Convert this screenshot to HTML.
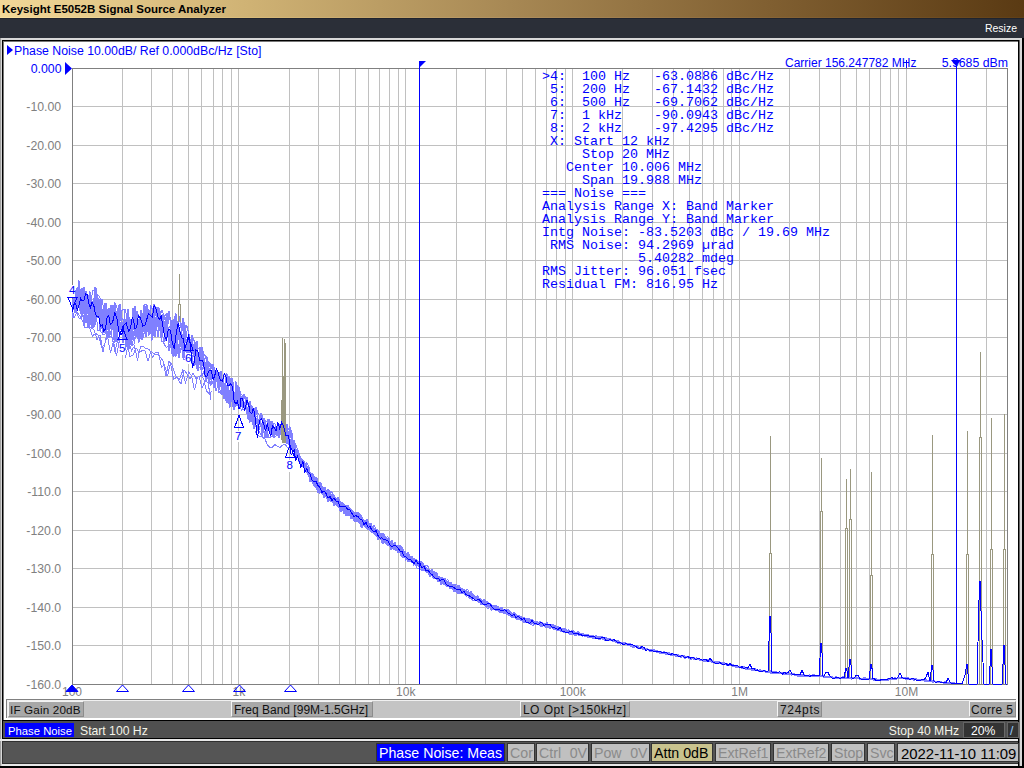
<!DOCTYPE html><html><head><meta charset="utf-8"><style>
html,body{margin:0;padding:0;width:1024px;height:768px;overflow:hidden;background:#000;position:relative}
.t{position:absolute;white-space:pre}
.r{position:absolute}
</style></head><body><div class="r" style="left:0px;top:0px;width:1024px;height:768px;background:#c8c8c8;"></div>
<div class="r" style="left:0px;top:0px;width:1024px;height:18px;background:linear-gradient(to right,#f2d898 0%,#cfb274 24.4%,#a78854 49.8%,#805f31 75.2%,#5a3a13 100%);"></div>
<div class="r" style="left:0px;top:17px;width:1024px;height:1px;background:linear-gradient(to right,#f8e0a0 0%,#d8bb7a 24.4%,#b09060 49.8%,#886537 75.2%,#603f16 100%);"></div>
<div class="t" style="left:2px;top:4.45px;font-size:11.5px;line-height:11.5px;color:#000;font-weight:bold;font-family:'Liberation Sans', sans-serif;">Keysight E5052B Signal Source Analyzer</div>
<div class="r" style="left:0px;top:18px;width:1024px;height:20px;background:#2b2f38;"></div>
<div class="r" style="left:0px;top:18px;width:1024px;height:1px;background:#20242e;"></div>
<div class="t" style="right:7px;top:23.28px;font-size:10.5px;line-height:10.5px;color:#fff;font-weight:normal;font-family:'Liberation Sans', sans-serif;">Resize</div>
<div class="r" style="left:0px;top:38px;width:1024px;height:730px;background:#000;"></div>
<div class="r" style="left:0px;top:38px;width:1022px;height:728px;background:#d8d8d8;"></div>
<div class="r" style="left:0px;top:38px;width:1px;height:730px;background:#a0a0a0;"></div>
<div class="r" style="left:2px;top:40px;width:1017px;height:681px;background:#000;"></div>
<div class="r" style="left:3px;top:41px;width:1015px;height:679px;background:#777;"></div>
<div class="r" style="left:4px;top:42px;width:1014px;height:678px;background:#fff;"></div>
<div class="r" style="left:1019px;top:40px;width:1px;height:726px;background:#666;"></div>
<div class="r" style="left:1018px;top:40px;width:1px;height:726px;background:#000;"></div>
<svg width="1024" height="768" style="position:absolute;left:0;top:0"><rect x="122" y="68" width="1" height="616" fill="#c0c0c0"/><rect x="151" y="68" width="1" height="616" fill="#c0c0c0"/><rect x="172" y="68" width="1" height="616" fill="#c0c0c0"/><rect x="188" y="68" width="1" height="616" fill="#c0c0c0"/><rect x="201" y="68" width="1" height="616" fill="#c0c0c0"/><rect x="213" y="68" width="1" height="616" fill="#c0c0c0"/><rect x="222" y="68" width="1" height="616" fill="#c0c0c0"/><rect x="231" y="68" width="1" height="616" fill="#c0c0c0"/><rect x="238" y="68" width="1" height="616" fill="#c0c0c0"/><rect x="289" y="68" width="1" height="616" fill="#c0c0c0"/><rect x="318" y="68" width="1" height="616" fill="#c0c0c0"/><rect x="339" y="68" width="1" height="616" fill="#c0c0c0"/><rect x="355" y="68" width="1" height="616" fill="#c0c0c0"/><rect x="368" y="68" width="1" height="616" fill="#c0c0c0"/><rect x="379" y="68" width="1" height="616" fill="#c0c0c0"/><rect x="389" y="68" width="1" height="616" fill="#c0c0c0"/><rect x="398" y="68" width="1" height="616" fill="#c0c0c0"/><rect x="405" y="68" width="1" height="616" fill="#c0c0c0"/><rect x="456" y="68" width="1" height="616" fill="#c0c0c0"/><rect x="485" y="68" width="1" height="616" fill="#c0c0c0"/><rect x="506" y="68" width="1" height="616" fill="#c0c0c0"/><rect x="522" y="68" width="1" height="616" fill="#c0c0c0"/><rect x="535" y="68" width="1" height="616" fill="#c0c0c0"/><rect x="546" y="68" width="1" height="616" fill="#c0c0c0"/><rect x="556" y="68" width="1" height="616" fill="#c0c0c0"/><rect x="565" y="68" width="1" height="616" fill="#c0c0c0"/><rect x="572" y="68" width="1" height="616" fill="#c0c0c0"/><rect x="622" y="68" width="1" height="616" fill="#c0c0c0"/><rect x="652" y="68" width="1" height="616" fill="#c0c0c0"/><rect x="673" y="68" width="1" height="616" fill="#c0c0c0"/><rect x="689" y="68" width="1" height="616" fill="#c0c0c0"/><rect x="702" y="68" width="1" height="616" fill="#c0c0c0"/><rect x="713" y="68" width="1" height="616" fill="#c0c0c0"/><rect x="723" y="68" width="1" height="616" fill="#c0c0c0"/><rect x="731" y="68" width="1" height="616" fill="#c0c0c0"/><rect x="739" y="68" width="1" height="616" fill="#c0c0c0"/><rect x="789" y="68" width="1" height="616" fill="#c0c0c0"/><rect x="819" y="68" width="1" height="616" fill="#c0c0c0"/><rect x="840" y="68" width="1" height="616" fill="#c0c0c0"/><rect x="856" y="68" width="1" height="616" fill="#c0c0c0"/><rect x="869" y="68" width="1" height="616" fill="#c0c0c0"/><rect x="880" y="68" width="1" height="616" fill="#c0c0c0"/><rect x="890" y="68" width="1" height="616" fill="#c0c0c0"/><rect x="898" y="68" width="1" height="616" fill="#c0c0c0"/><rect x="906" y="68" width="1" height="616" fill="#c0c0c0"/><rect x="956" y="68" width="1" height="616" fill="#c0c0c0"/><rect x="986" y="68" width="1" height="616" fill="#c0c0c0"/><rect x="72" y="106" width="935" height="1" fill="#c0c0c0"/><rect x="72" y="145" width="935" height="1" fill="#c0c0c0"/><rect x="72" y="183" width="935" height="1" fill="#c0c0c0"/><rect x="72" y="222" width="935" height="1" fill="#c0c0c0"/><rect x="72" y="260" width="935" height="1" fill="#c0c0c0"/><rect x="72" y="299" width="935" height="1" fill="#c0c0c0"/><rect x="72" y="337" width="935" height="1" fill="#c0c0c0"/><rect x="72" y="376" width="935" height="1" fill="#c0c0c0"/><rect x="72" y="414" width="935" height="1" fill="#c0c0c0"/><rect x="72" y="453" width="935" height="1" fill="#c0c0c0"/><rect x="72" y="491" width="935" height="1" fill="#c0c0c0"/><rect x="72" y="530" width="935" height="1" fill="#c0c0c0"/><rect x="72" y="568" width="935" height="1" fill="#c0c0c0"/><rect x="72" y="607" width="935" height="1" fill="#c0c0c0"/><rect x="72" y="645" width="935" height="1" fill="#c0c0c0"/><rect x="72" y="68" width="936" height="1" fill="#808080"/><rect x="72" y="684" width="936" height="1" fill="#808080"/><rect x="72" y="68" width="1" height="617" fill="#808080"/><rect x="1007" y="68" width="1" height="617" fill="#808080"/><polygon points="72.0,299.1 74.0,299.1 76.0,297.7 78.0,296.3 80.0,297.8 82.0,299.0 84.0,302.6 86.0,305.6 88.0,303.0 90.0,303.0 92.0,304.8 94.0,304.7 96.0,304.5 98.0,304.6 100.0,309.2 102.0,313.5 104.0,313.7 106.0,315.6 108.0,313.9 110.0,315.4 112.0,315.2 114.0,318.3 116.0,317.6 118.0,320.9 120.0,321.8 122.0,322.3 124.0,319.8 126.0,323.3 128.0,323.9 130.0,323.6 132.0,320.5 134.0,321.4 136.0,320.2 138.0,320.1 140.0,322.6 142.0,319.2 144.0,319.9 146.0,320.7 148.0,317.9 150.0,318.1 152.0,317.9 154.0,317.4 156.0,316.4 158.0,319.4 160.0,322.3 162.0,319.5 164.0,324.6 166.0,325.1 168.0,325.5 170.0,331.3 172.0,331.3 174.0,329.2 176.0,331.3 178.0,331.6 180.0,330.0 182.0,333.8 184.0,335.3 186.0,339.3 188.0,343.6 190.0,343.6 192.0,347.2 194.0,348.4 196.0,351.6 198.0,352.1 200.0,355.5 202.0,359.3 204.0,364.2 206.0,367.6 208.0,366.7 210.0,370.4 212.0,374.0 214.0,371.5 216.0,375.2 218.0,377.2 220.0,380.7 222.0,381.8 224.0,382.2 226.0,384.2 228.0,386.5 230.0,391.3 232.0,389.5 234.0,390.9 236.0,393.5 238.0,394.8 240.0,396.7 242.0,397.4 244.0,401.1 246.0,402.9 248.0,408.2 250.0,410.3 252.0,412.2 254.0,416.1 256.0,417.0 258.0,421.0 260.0,421.3 262.0,423.6 264.0,422.1 266.0,425.7 268.0,423.5 270.0,423.8 272.0,427.3 274.0,427.2 276.0,428.9 278.0,431.5 280.0,426.2 282.0,426.6 284.0,428.8 286.0,431.1 288.0,432.0 290.0,433.9 292.0,440.2 294.0,444.9 296.0,447.5 298.0,453.9 300.0,459.1 302.0,459.9 304.0,464.3 306.0,465.0 306.0,466.1 304.0,468.8 302.0,463.7 300.0,461.3 298.0,455.1 296.0,452.0 294.0,445.9 292.0,441.3 290.0,437.3 288.0,435.0 286.0,435.3 284.0,432.8 282.0,432.5 280.0,428.7 278.0,430.1 276.0,431.7 274.0,429.6 272.0,430.0 270.0,430.8 268.0,429.9 266.0,429.8 264.0,429.1 262.0,424.2 260.0,423.6 258.0,425.6 256.0,422.6 254.0,418.6 252.0,418.1 250.0,411.1 248.0,408.7 246.0,409.4 244.0,407.7 242.0,404.7 240.0,402.6 238.0,401.7 236.0,397.0 234.0,399.9 232.0,396.0 230.0,397.2 228.0,394.6 226.0,392.1 224.0,389.4 222.0,386.0 220.0,385.3 218.0,383.8 216.0,378.8 214.0,378.6 212.0,378.5 210.0,377.4 208.0,375.8 206.0,371.6 204.0,368.7 202.0,365.4 200.0,363.8 198.0,359.6 196.0,357.2 194.0,355.5 192.0,353.8 190.0,350.4 188.0,350.4 186.0,343.8 184.0,341.7 182.0,341.4 180.0,339.0 178.0,340.6 176.0,339.0 174.0,339.9 172.0,339.1 170.0,337.9 168.0,331.9 166.0,331.5 164.0,330.1 162.0,326.2 160.0,328.4 158.0,326.3 156.0,323.7 154.0,323.8 152.0,327.8 150.0,324.5 148.0,324.2 146.0,326.4 144.0,326.8 142.0,327.9 140.0,327.6 138.0,328.4 136.0,328.2 134.0,329.9 132.0,332.2 130.0,331.4 128.0,334.4 126.0,331.1 124.0,331.7 122.0,330.2 120.0,330.1 118.0,328.1 116.0,329.4 114.0,325.2 112.0,325.4 110.0,324.3 108.0,323.8 106.0,325.3 104.0,324.3 102.0,317.6 100.0,317.6 98.0,316.0 96.0,312.1 94.0,314.1 92.0,310.0 90.0,313.5 88.0,308.6 86.0,311.9 84.0,308.6 82.0,305.7 80.0,306.8 78.0,305.2 76.0,306.2 74.0,306.3 72.0,307.4" fill="#8080ff" shape-rendering="crispEdges"/><polyline points="72.0,317.9 74.0,297.8 76.0,292.2 78.0,300.0 80.0,309.6 82.0,288.0 84.0,301.7 86.0,293.0 88.0,314.4 90.0,322.0 92.0,302.9 94.0,302.8 96.0,310.7 98.0,297.6 100.0,302.9 102.0,309.8 104.0,317.6 106.0,305.1 108.0,329.5 110.0,323.9 112.0,314.0 114.0,305.4 116.0,334.7 118.0,308.9 120.0,309.7 122.0,310.4 124.0,308.9 126.0,346.9 128.0,318.3 130.0,319.4 132.0,340.3 134.0,330.8 136.0,313.4 138.0,322.6 140.0,339.3 142.0,319.5 144.0,331.7 146.0,307.8 148.0,331.2 150.0,332.5 152.0,334.0 154.0,327.7 156.0,317.1 158.0,308.0 160.0,323.8 162.0,333.7 164.0,315.7 166.0,319.6 168.0,332.0 170.0,343.4 172.0,352.7 174.0,318.7 176.0,321.4 178.0,349.4 180.0,342.0 182.0,347.0 184.0,359.5 186.0,358.5 188.0,357.1 190.0,357.2 192.0,346.6 194.0,357.0 196.0,344.3 198.0,365.7 200.0,368.2 202.0,369.9 204.0,364.1 206.0,365.2 208.0,369.2 210.0,362.5 212.0,384.1 214.0,378.0 216.0,375.5 218.0,381.1 220.0,387.1 222.0,380.2 224.0,395.5 226.0,401.0 228.0,386.4 230.0,379.9 232.0,402.1 234.0,410.3 236.0,385.3 238.0,403.5 240.0,407.4 242.0,410.4 244.0,395.8 246.0,397.8 248.0,418.3 250.0,403.1 252.0,406.9 254.0,419.6 256.0,418.7 258.0,428.1 260.0,416.3 262.0,434.9 264.0,419.7 266.0,433.6 268.0,418.8 270.0,428.3 272.0,420.9 274.0,427.1 276.0,427.2 278.0,433.7 280.0,428.5 282.0,420.1 284.0,441.9 286.0,441.1 288.0,443.3 290.0,431.0 292.0,439.0 294.0,441.4 296.0,445.4 298.0,450.0 300.0,459.9 302.0,458.9 304.0,461.7 306.0,470.8" fill="none" stroke="#8080ff" stroke-width="1" shape-rendering="crispEdges"/><polyline points="73.0,301.8 75.0,289.9 77.0,309.1 79.0,291.4 81.0,304.8 83.0,296.7 85.0,308.0 87.0,312.8 89.0,309.4 91.0,303.7 93.0,321.3 95.0,325.8 97.0,293.9 99.0,296.1 101.0,299.5 103.0,334.7 105.0,334.6 107.0,310.4 109.0,338.0 111.0,310.2 113.0,322.5 115.0,322.9 117.0,341.8 119.0,305.3 121.0,318.2 123.0,332.1 125.0,308.6 127.0,316.7 129.0,326.4 131.0,342.9 133.0,336.8 135.0,338.4 137.0,335.3 139.0,332.8 141.0,337.7 143.0,330.8 145.0,332.3 147.0,315.3 149.0,309.6 151.0,331.6 153.0,308.5 155.0,337.0 157.0,325.5 159.0,317.4 161.0,338.2 163.0,314.0 165.0,328.3 167.0,313.2 169.0,351.3 171.0,337.0 173.0,348.8 175.0,326.1 177.0,349.4 179.0,344.8 181.0,342.8 183.0,357.5 185.0,337.9 187.0,340.3 189.0,353.1 191.0,360.2 193.0,345.8 195.0,359.0 197.0,346.3 199.0,360.1 201.0,370.0 203.0,350.6 205.0,374.4 207.0,356.4 209.0,384.5 211.0,374.0 213.0,373.9 215.0,383.3 217.0,379.7 219.0,386.6 221.0,371.2 223.0,386.4 225.0,388.5 227.0,402.9 229.0,375.7 231.0,391.3 233.0,398.3 235.0,396.6 237.0,384.6 239.0,401.0 241.0,393.9 243.0,395.9 245.0,410.5 247.0,401.1 249.0,409.0 251.0,418.8 253.0,421.2 255.0,420.6 257.0,428.8 259.0,421.9 261.0,427.2 263.0,433.3 265.0,431.3 267.0,430.9 269.0,426.5 271.0,430.3 273.0,428.0 275.0,434.5 277.0,428.0 279.0,429.0 281.0,434.6 283.0,429.9 285.0,428.0 287.0,440.6 289.0,432.8 291.0,445.3 293.0,448.2 295.0,447.3 297.0,455.4 299.0,452.9 301.0,460.1 303.0,466.9 305.0,466.8 307.0,469.1" fill="none" stroke="#8080ff" stroke-width="1" shape-rendering="crispEdges"/><polyline points="72.0,308.2 74.0,309.0 76.0,305.5 78.0,298.5 80.0,289.0 82.0,295.9 84.0,298.2 86.0,304.7 88.0,328.2 90.0,301.8 92.0,306.0 94.0,302.8 96.0,312.6 98.0,330.7 100.0,329.4 102.0,311.6 104.0,311.2 106.0,333.2 108.0,320.1 110.0,327.9 112.0,305.1 114.0,337.6 116.0,315.8 118.0,324.5 120.0,312.6 122.0,323.4 124.0,343.2 126.0,343.4 128.0,327.1 130.0,338.7 132.0,325.1 134.0,321.0 136.0,327.2 138.0,313.7 140.0,317.8 142.0,332.0 144.0,333.9 146.0,306.2 148.0,331.4 150.0,334.1 152.0,319.4 154.0,304.2 156.0,328.3 158.0,314.1 160.0,327.7 162.0,320.9 164.0,331.8 166.0,319.3 168.0,329.5 170.0,333.6 172.0,340.6 174.0,322.1 176.0,356.5 178.0,325.5 180.0,325.6 182.0,326.3 184.0,321.8 186.0,339.0 188.0,354.6 190.0,354.9 192.0,340.0 194.0,340.4 196.0,348.8 198.0,366.0 200.0,359.2 202.0,376.4 204.0,370.7 206.0,372.3 208.0,378.6 210.0,380.2 212.0,371.6 214.0,370.8 216.0,376.8 218.0,379.6 220.0,372.0 222.0,381.8 224.0,389.8 226.0,376.4 228.0,378.2 230.0,381.1 232.0,386.2 234.0,409.3 236.0,381.7 238.0,389.1 240.0,391.2 242.0,400.7 244.0,393.8 246.0,404.6 248.0,401.6 250.0,406.4 252.0,421.5 254.0,409.5 256.0,423.1 258.0,419.5 260.0,421.7 262.0,432.6 264.0,418.3 266.0,437.2 268.0,436.6 270.0,432.2 272.0,421.2 274.0,432.9 276.0,432.0 278.0,434.6 280.0,424.0 282.0,439.4 284.0,439.5 286.0,424.1 288.0,430.4 290.0,426.6 292.0,447.0 294.0,452.3 296.0,457.0 298.0,456.4 300.0,461.3 302.0,464.0 304.0,465.5 306.0,471.7" fill="none" stroke="#8080ff" stroke-width="1" shape-rendering="crispEdges"/><polyline points="73.0,306.3 75.0,295.8 77.0,302.5 79.0,280.5 81.0,313.2 83.0,313.4 85.0,304.3 87.0,321.8 89.0,318.5 91.0,301.2 93.0,289.7 95.0,291.9 97.0,294.1 99.0,303.4 101.0,312.7 103.0,332.9 105.0,311.8 107.0,334.2 109.0,327.3 111.0,334.9 113.0,318.4 115.0,302.4 117.0,336.4 119.0,314.2 121.0,310.5 123.0,341.2 125.0,337.3 127.0,315.7 129.0,318.0 131.0,345.3 133.0,317.1 135.0,333.5 137.0,311.0 139.0,336.9 141.0,310.0 143.0,324.5 145.0,305.7 147.0,324.7 149.0,335.5 151.0,305.9 153.0,312.6 155.0,331.2 157.0,325.9 159.0,316.9 161.0,328.3 163.0,324.4 165.0,341.4 167.0,321.3 169.0,342.5 171.0,339.7 173.0,345.9 175.0,330.4 177.0,345.8 179.0,344.6 181.0,330.9 183.0,318.1 185.0,358.3 187.0,351.2 189.0,336.3 191.0,356.7 193.0,343.9 195.0,352.4 197.0,367.7 199.0,356.6 201.0,354.2 203.0,358.1 205.0,354.6 207.0,362.2 209.0,366.8 211.0,366.6 213.0,365.2 215.0,376.8 217.0,371.8 219.0,386.8 221.0,393.8 223.0,378.0 225.0,388.9 227.0,389.2 229.0,376.9 231.0,380.2 233.0,406.6 235.0,394.2 237.0,405.6 239.0,387.3 241.0,402.5 243.0,409.5 245.0,410.3 247.0,397.3 249.0,410.4 251.0,410.0 253.0,422.5 255.0,407.9 257.0,415.0 259.0,430.4 261.0,423.6 263.0,424.6 265.0,438.2 267.0,423.8 269.0,419.0 271.0,427.1 273.0,423.8 275.0,423.9 277.0,431.2 279.0,437.8 281.0,431.1 283.0,433.2 285.0,427.7 287.0,435.0 289.0,440.6 291.0,440.4 293.0,448.5 295.0,448.8 297.0,449.1 299.0,458.3 301.0,461.0 303.0,460.5 305.0,467.2 307.0,471.7" fill="none" stroke="#8080ff" stroke-width="1" shape-rendering="crispEdges"/><polyline points="72.0,289.8 74.0,304.0 76.0,311.5 78.0,297.7 80.0,292.7 82.0,299.3 84.0,308.1 86.0,314.9 88.0,310.2 90.0,291.4 92.0,322.2 94.0,327.7 96.0,290.4 98.0,299.1 100.0,299.8 102.0,329.3 104.0,332.9 106.0,303.8 108.0,314.3 110.0,309.5 112.0,320.6 114.0,339.8 116.0,305.5 118.0,310.6 120.0,325.3 122.0,328.1 124.0,339.4 126.0,325.7 128.0,312.8 130.0,321.4 132.0,346.4 134.0,335.9 136.0,310.6 138.0,336.9 140.0,317.6 142.0,334.9 144.0,305.1 146.0,337.2 148.0,309.7 150.0,320.3 152.0,327.7 154.0,321.4 156.0,309.8 158.0,310.5 160.0,316.6 162.0,310.1 164.0,316.6 166.0,314.3 168.0,329.0 170.0,326.3 172.0,338.6 174.0,325.6 176.0,314.6 178.0,327.4 180.0,347.4 182.0,326.3 184.0,335.5 186.0,351.5 188.0,341.6 190.0,360.9 192.0,364.0 194.0,346.1 196.0,362.4 198.0,349.0 200.0,347.6 202.0,360.7 204.0,369.0 206.0,381.5 208.0,361.8 210.0,379.2 212.0,374.9 214.0,367.6 216.0,390.5 218.0,384.9 220.0,371.6 222.0,394.8 224.0,373.8 226.0,375.0 228.0,384.6 230.0,407.5 232.0,377.9 234.0,407.9 236.0,399.3 238.0,385.9 240.0,401.1 242.0,400.3 244.0,404.2 246.0,409.8 248.0,412.1 250.0,422.5 252.0,406.4 254.0,425.6 256.0,417.8 258.0,428.9 260.0,433.0 262.0,436.8 264.0,420.8 266.0,426.3 268.0,437.6 270.0,437.7 272.0,427.2 274.0,437.6 276.0,428.7 278.0,427.6 280.0,434.1 282.0,429.0 284.0,429.5 286.0,430.0 288.0,433.0 290.0,428.8 292.0,432.9 294.0,449.7 296.0,451.3 298.0,457.1 300.0,462.5 302.0,459.9 304.0,462.3 306.0,465.1" fill="none" stroke="#8080ff" stroke-width="1" shape-rendering="crispEdges"/><polyline points="73.0,295.3 75.0,312.3 77.0,296.8 79.0,294.0 81.0,309.4 83.0,292.7 85.0,292.1 87.0,315.6 89.0,318.6 91.0,299.4 93.0,314.5 95.0,287.4 97.0,304.5 99.0,315.2 101.0,305.0 103.0,312.2 105.0,323.2 107.0,323.2 109.0,307.9 111.0,329.3 113.0,305.5 115.0,342.6 117.0,311.5 119.0,314.6 121.0,313.1 123.0,349.9 125.0,318.8 127.0,333.0 129.0,348.7 131.0,345.7 133.0,308.1 135.0,326.5 137.0,329.2 139.0,332.6 141.0,318.2 143.0,317.4 145.0,304.5 147.0,305.2 149.0,324.2 151.0,305.6 153.0,309.9 155.0,315.2 157.0,307.3 159.0,307.8 161.0,337.9 163.0,323.7 165.0,316.7 167.0,338.0 169.0,310.7 171.0,322.2 173.0,355.9 175.0,353.5 177.0,341.8 179.0,315.8 181.0,327.7 183.0,318.2 185.0,329.6 187.0,326.1 189.0,333.5 191.0,353.5 193.0,338.1 195.0,342.2 197.0,369.2 199.0,352.9 201.0,355.7 203.0,351.2 205.0,376.4 207.0,375.0 209.0,373.9 211.0,377.7 213.0,366.2 215.0,371.6 217.0,381.3 219.0,392.4 221.0,391.0 223.0,388.6 225.0,387.3 227.0,373.4 229.0,404.4 231.0,378.3 233.0,381.9 235.0,401.1 237.0,405.8 239.0,406.0 241.0,399.2 243.0,395.5 245.0,395.7 247.0,413.7 249.0,420.1 251.0,407.2 253.0,425.2 255.0,416.6 257.0,416.2 259.0,422.9 261.0,412.6 263.0,424.4 265.0,419.9 267.0,432.5 269.0,428.5 271.0,436.2 273.0,436.8 275.0,427.6 277.0,426.3 279.0,437.6 281.0,429.6 283.0,420.5 285.0,421.5 287.0,444.1 289.0,437.0 291.0,429.9 293.0,443.5 295.0,448.1 297.0,452.0 299.0,462.0 301.0,465.1 303.0,460.1 305.0,462.7 307.0,467.6" fill="none" stroke="#8080ff" stroke-width="1" shape-rendering="crispEdges"/><polyline points="72.0,314.1 74.0,306.9 76.0,311.3 78.0,305.2 80.0,290.1 82.0,317.8 84.0,287.1 86.0,315.3 88.0,295.3 90.0,306.8 92.0,329.0 94.0,310.3 96.0,288.3 98.0,307.2 100.0,319.9 102.0,299.5 104.0,310.7 106.0,302.9 108.0,321.8 110.0,316.5 112.0,322.0 114.0,314.3 116.0,330.2 118.0,310.7 120.0,343.8 122.0,347.7 124.0,327.8 126.0,327.0 128.0,343.7 130.0,318.7 132.0,339.1 134.0,317.6 136.0,334.0 138.0,318.7 140.0,328.6 142.0,340.4 144.0,306.7 146.0,334.8 148.0,324.1 150.0,317.4 152.0,315.8 154.0,304.5 156.0,313.1 158.0,326.6 160.0,310.9 162.0,330.7 164.0,343.6 166.0,347.3 168.0,346.6 170.0,345.9 172.0,320.0 174.0,356.5 176.0,322.2 178.0,352.6 180.0,353.3 182.0,342.6 184.0,340.2 186.0,330.7 188.0,345.6 190.0,340.9 192.0,337.7 194.0,340.1 196.0,364.5 198.0,371.1 200.0,347.6 202.0,347.1 204.0,358.5 206.0,358.0 208.0,363.0 210.0,376.1 212.0,373.5 214.0,375.1 216.0,370.9 218.0,384.1 220.0,375.8 222.0,380.7 224.0,384.5 226.0,400.6 228.0,381.8 230.0,399.9 232.0,387.1 234.0,407.2 236.0,392.7 238.0,397.8 240.0,408.7 242.0,405.0 244.0,395.3 246.0,398.7 248.0,418.4 250.0,401.1 252.0,409.8 254.0,429.4 256.0,407.5 258.0,413.4 260.0,416.8 262.0,415.2 264.0,425.7 266.0,429.6 268.0,424.2 270.0,421.0 272.0,435.2 274.0,435.3 276.0,431.3 278.0,423.4 280.0,430.1 282.0,432.4 284.0,429.1 286.0,440.6 288.0,432.0 290.0,436.5 292.0,433.9 294.0,446.7 296.0,454.0 298.0,457.7 300.0,457.8 302.0,466.8 304.0,466.9 306.0,466.5" fill="none" stroke="#8080ff" stroke-width="1" shape-rendering="crispEdges"/><polyline points="73.0,299.3 75.0,313.1 77.0,288.5 79.0,308.0 81.0,313.0 83.0,306.2 85.0,321.9 87.0,306.4 89.0,306.4 91.0,298.9 93.0,327.0 95.0,300.3 97.0,318.2 99.0,308.0 101.0,331.9 103.0,333.6 105.0,303.2 107.0,337.6 109.0,324.5 111.0,305.1 113.0,322.1 115.0,304.3 117.0,326.3 119.0,311.6 121.0,320.6 123.0,318.7 125.0,333.4 127.0,342.6 129.0,346.4 131.0,320.1 133.0,329.2 135.0,306.4 137.0,320.4 139.0,342.5 141.0,310.0 143.0,338.0 145.0,329.2 147.0,315.0 149.0,332.9 151.0,313.7 153.0,336.4 155.0,305.9 157.0,309.0 159.0,330.9 161.0,322.5 163.0,313.7 165.0,328.3 167.0,321.5 169.0,333.6 171.0,344.5 173.0,351.2 175.0,316.2 177.0,339.7 179.0,358.2 181.0,334.2 183.0,349.8 185.0,324.9 187.0,357.1 189.0,349.3 191.0,361.9 193.0,360.7 195.0,365.5 197.0,341.3 199.0,365.5 201.0,351.2 203.0,356.9 205.0,362.1 207.0,372.6 209.0,376.0 211.0,385.4 213.0,364.0 215.0,369.9 217.0,375.6 219.0,388.9 221.0,383.8 223.0,384.9 225.0,394.7 227.0,394.0 229.0,384.2 231.0,378.9 233.0,392.8 235.0,407.0 237.0,399.6 239.0,387.0 241.0,398.9 243.0,399.7 245.0,405.3 247.0,408.6 249.0,419.5 251.0,409.3 253.0,413.8 255.0,422.2 257.0,430.8 259.0,427.8 261.0,423.7 263.0,433.2 265.0,426.7 267.0,438.1 269.0,424.0 271.0,422.0 273.0,435.7 275.0,427.3 277.0,436.0 279.0,431.6 281.0,429.7 283.0,420.3 285.0,438.0 287.0,424.1 289.0,445.1 291.0,446.0 293.0,440.0 295.0,442.6 297.0,457.5 299.0,457.3 301.0,457.8 303.0,463.6 305.0,463.6 307.0,467.6" fill="none" stroke="#8080ff" stroke-width="1" shape-rendering="crispEdges"/><polyline points="72.0,307.4 74.0,317.9 76.0,314.2 78.0,287.3 80.0,301.7 82.0,304.2 84.0,325.9 86.0,291.2 88.0,308.2 90.0,325.6 92.0,303.9 94.0,297.9 96.0,311.5 98.0,302.3 100.0,331.0 102.0,300.6 104.0,309.2 106.0,305.2 108.0,328.0 110.0,313.2 112.0,337.5 114.0,338.7 116.0,342.0 118.0,314.3 120.0,303.9 122.0,321.9 124.0,349.4 126.0,340.5 128.0,309.3 130.0,336.0 132.0,343.7 134.0,344.5 136.0,333.8 138.0,339.0 140.0,337.7 142.0,318.8 144.0,308.4 146.0,331.7 148.0,308.7 150.0,317.6 152.0,340.5 154.0,323.3 156.0,322.6 158.0,337.4 160.0,316.6 162.0,341.8 164.0,341.8 166.0,323.4 168.0,323.3 170.0,316.3 172.0,353.6 174.0,321.4 176.0,313.5 178.0,353.6 180.0,339.8 182.0,344.9 184.0,348.8 186.0,324.7 188.0,330.4 190.0,347.9 192.0,335.2 194.0,352.5 196.0,362.4 198.0,362.3 200.0,363.5 202.0,348.1 204.0,357.7 206.0,380.4 208.0,361.2 210.0,374.8 212.0,364.2 214.0,388.0 216.0,370.0 218.0,377.5 220.0,382.6 222.0,389.6 224.0,398.7 226.0,395.3 228.0,385.1 230.0,377.8 232.0,400.4 234.0,409.7 236.0,381.4 238.0,405.2 240.0,391.5 242.0,400.3 244.0,403.4 246.0,407.5 248.0,418.4 250.0,415.6 252.0,412.0 254.0,423.1 256.0,419.2 258.0,419.7 260.0,420.5 262.0,424.9 264.0,421.2 266.0,421.5 268.0,420.6 270.0,427.6 272.0,425.7 274.0,435.9 276.0,436.1 278.0,427.1 280.0,431.6 282.0,438.3 284.0,427.5 286.0,433.8 288.0,433.2 290.0,439.4 292.0,449.4 294.0,440.0 296.0,456.7 298.0,457.0 300.0,462.4 302.0,463.6 304.0,468.3 306.0,465.6" fill="none" stroke="#8080ff" stroke-width="1" shape-rendering="crispEdges"/><polygon points="306.0,462.8 308.0,467.1 310.0,470.9 312.0,474.0 314.0,476.7 316.0,479.2 318.0,481.5 320.0,483.7 322.0,485.7 324.0,487.6 326.0,489.4 328.0,491.1 330.0,492.8 332.0,494.4 334.0,496.0 336.0,497.5 338.0,499.0 340.0,500.5 342.0,502.0 344.0,503.5 346.0,505.0 348.0,506.5 350.0,508.0 352.0,509.6 354.0,511.2 356.0,512.9 358.0,514.5 360.0,516.1 362.0,517.6 364.0,519.2 366.0,520.7 368.0,522.2 370.0,523.8 372.0,525.4 374.0,527.1 376.0,528.8 378.0,530.5 380.0,532.2 382.0,533.9 384.0,535.6 386.0,537.4 388.0,539.0 390.0,540.5 392.0,541.9 394.0,543.2 396.0,544.4 398.0,545.7 400.0,547.1 402.0,548.7 404.0,550.5 406.0,552.3 408.0,554.0 410.0,555.6 412.0,557.0 414.0,558.2 416.0,559.5 418.0,560.7 420.0,562.0 422.0,563.4 424.0,564.9 426.0,566.4 428.0,567.9 430.0,569.4 432.0,570.9 434.0,572.5 436.0,574.0 438.0,575.5 440.0,576.8 442.0,578.0 444.0,579.1 446.0,580.2 448.0,581.2 450.0,582.3 452.0,583.4 454.0,584.4 456.0,585.4 458.0,586.4 460.0,587.4 462.0,588.4 464.0,589.4 466.0,590.4 468.0,591.4 470.0,592.5 472.0,593.6 474.0,594.7 476.0,595.9 478.0,597.1 480.0,598.3 482.0,599.4 484.0,600.6 486.0,601.7 488.0,602.7 490.0,603.7 492.0,604.6 494.0,605.4 496.0,606.3 498.0,607.0 500.0,607.8 502.0,608.6 504.0,609.3 506.0,610.1 508.0,610.8 510.0,611.6 512.0,612.4 514.0,613.2 516.0,614.1 518.0,615.0 520.0,615.8 522.0,616.6 524.0,617.4 526.0,618.2 528.0,618.9 530.0,619.5 532.0,620.1 534.0,620.6 536.0,621.0 538.0,621.5 540.0,621.9 542.0,622.3 544.0,622.8 546.0,623.2 548.0,623.7 550.0,624.2 552.0,624.8 554.0,625.4 556.0,626.1 558.0,626.7 560.0,627.4 562.0,628.1 564.0,628.7 566.0,629.4 568.0,630.0 570.0,630.5 572.0,631.0 574.0,631.5 576.0,631.9 578.0,632.3 580.0,632.8 582.0,633.2 584.0,633.6 586.0,634.0 588.0,634.4 590.0,634.8 592.0,635.2 594.0,635.6 596.0,636.0 598.0,636.4 600.0,636.8 602.0,637.2 604.0,637.6 606.0,638.0 608.0,638.5 610.0,638.9 612.0,639.4 614.0,639.9 616.0,640.4 618.0,640.9 620.0,641.4 622.0,641.9 624.0,642.5 626.0,643.0 628.0,643.5 630.0,644.0 632.0,644.6 634.0,645.1 636.0,645.6 638.0,646.1 640.0,646.7 642.0,647.2 644.0,647.7 646.0,648.2 648.0,648.7 650.0,649.2 652.0,649.6 654.0,650.0 656.0,650.4 658.0,650.8 660.0,651.2 662.0,651.6 664.0,652.0 666.0,652.4 668.0,652.8 670.0,653.2 672.0,653.6 674.0,654.0 676.0,654.4 678.0,654.8 680.0,655.3 682.0,655.7 684.0,656.1 686.0,656.5 688.0,656.8 690.0,657.2 692.0,657.5 694.0,657.8 696.0,658.1 698.0,658.4 700.0,658.7 702.0,659.0 704.0,659.3 706.0,659.6 708.0,659.9 710.0,660.2 712.0,660.6 714.0,660.9 716.0,661.3 718.0,661.7 720.0,662.1 722.0,662.6 724.0,663.0 726.0,663.4 728.0,663.8 730.0,664.2 732.0,664.6 734.0,665.0 736.0,665.5 738.0,665.9 740.0,666.3 742.0,666.7 744.0,667.1 746.0,667.5 748.0,667.9 750.0,668.2 752.0,668.6 754.0,668.9 756.0,669.2 758.0,669.6 760.0,669.9 762.0,670.2 764.0,670.5 766.0,670.7 768.0,671.0 770.0,671.3 772.0,671.5 774.0,671.7 776.0,671.9 778.0,672.1 780.0,672.3 782.0,672.5 784.0,672.7 786.0,672.9 788.0,673.1 790.0,673.3 792.0,673.5 794.0,673.7 796.0,674.0 798.0,674.3 800.0,674.5 802.0,674.8 804.0,675.0 806.0,675.1 808.0,675.2 810.0,675.3 812.0,675.3 814.0,675.3 816.0,675.3 818.0,675.3 820.0,675.3 822.0,675.4 824.0,675.5 826.0,675.7 828.0,676.0 830.0,676.3 832.0,676.6 834.0,676.9 836.0,677.1 838.0,677.3 840.0,677.3 842.0,677.3 844.0,677.3 846.0,677.3 848.0,677.3 850.0,677.3 852.0,677.3 854.0,677.4 856.0,677.5 858.0,677.5 860.0,677.7 862.0,677.8 864.0,677.9 866.0,678.0 868.0,678.2 870.0,678.3 872.0,678.5 874.0,678.8 876.0,679.1 878.0,679.3 880.0,679.3 882.0,679.3 884.0,679.1 886.0,678.9 888.0,678.6 890.0,678.3 892.0,678.1 894.0,677.8 896.0,677.6 898.0,677.4 900.0,677.4 902.0,677.4 904.0,677.5 906.0,677.7 908.0,677.9 910.0,678.1 912.0,678.4 914.0,678.6 916.0,678.9 918.0,679.2 920.0,679.4 922.0,679.6 924.0,679.8 926.0,680.0 928.0,680.2 930.0,680.4 932.0,680.6 934.0,680.8 936.0,681.0 938.0,681.2 940.0,681.4 942.0,681.5 944.0,681.7 946.0,681.8 948.0,682.0 950.0,682.1 952.0,682.2 954.0,682.3 954.0,683.5 952.0,683.4 950.0,683.3 948.0,683.2 946.0,683.1 944.0,682.9 942.0,682.8 940.0,682.6 938.0,682.4 936.0,682.3 934.0,682.1 932.0,681.9 930.0,681.7 928.0,681.5 926.0,681.2 924.0,681.0 922.0,680.8 920.0,680.6 918.0,680.4 916.0,680.2 914.0,679.9 912.0,679.6 910.0,679.4 908.0,679.1 906.0,678.9 904.0,678.8 902.0,678.7 900.0,678.6 898.0,678.7 896.0,678.9 894.0,679.1 892.0,679.4 890.0,679.7 888.0,679.9 886.0,680.2 884.0,680.4 882.0,680.6 880.0,680.7 878.0,680.6 876.0,680.4 874.0,680.1 872.0,679.9 870.0,679.7 868.0,679.5 866.0,679.4 864.0,679.3 862.0,679.1 860.0,679.0 858.0,678.9 856.0,678.8 854.0,678.7 852.0,678.7 850.0,678.7 848.0,678.7 846.0,678.7 844.0,678.7 842.0,678.7 840.0,678.7 838.0,678.6 836.0,678.5 834.0,678.3 832.0,678.0 830.0,677.7 828.0,677.4 826.0,677.1 824.0,676.9 822.0,676.8 820.0,676.7 818.0,676.7 816.0,676.7 814.0,676.7 812.0,676.7 810.0,676.7 808.0,676.7 806.0,676.6 804.0,676.4 802.0,676.2 800.0,676.0 798.0,675.7 796.0,675.5 794.0,675.2 792.0,674.9 790.0,674.7 788.0,674.5 786.0,674.3 784.0,674.1 782.0,673.9 780.0,673.7 778.0,673.5 776.0,673.4 774.0,673.2 772.0,673.0 770.0,672.7 768.0,672.5 766.0,672.2 764.0,672.0 762.0,671.7 760.0,671.4 758.0,671.1 756.0,670.8 754.0,670.4 752.0,670.1 750.0,669.8 748.0,669.4 746.0,669.0 744.0,668.7 742.0,668.2 740.0,667.8 738.0,667.4 736.0,667.0 734.0,666.6 732.0,666.2 730.0,665.8 728.0,665.4 726.0,665.0 724.0,664.5 722.0,664.1 720.0,663.7 718.0,663.3 716.0,662.9 714.0,662.5 712.0,662.1 710.0,661.8 708.0,661.5 706.0,661.2 704.0,660.9 702.0,660.6 700.0,660.3 698.0,660.0 696.0,659.7 694.0,659.4 692.0,659.1 690.0,658.8 688.0,658.5 686.0,658.1 684.0,657.7 682.0,657.3 680.0,656.9 678.0,656.5 676.0,656.1 674.0,655.6 672.0,655.2 670.0,654.8 668.0,654.4 666.0,654.0 664.0,653.7 662.0,653.3 660.0,652.9 658.0,652.5 656.0,652.1 654.0,651.7 652.0,651.3 650.0,650.8 648.0,650.4 646.0,649.9 644.0,649.5 642.0,649.0 640.0,648.5 638.0,648.0 636.0,647.5 634.0,647.0 632.0,646.5 630.0,646.0 628.0,645.5 626.0,645.0 624.0,644.5 622.0,644.0 620.0,643.5 618.0,643.0 616.0,642.5 614.0,642.0 612.0,641.5 610.0,641.1 608.0,640.7 606.0,640.2 604.0,639.9 602.0,639.5 600.0,639.1 598.0,638.7 596.0,638.3 594.0,638.0 592.0,637.6 590.0,637.2 588.0,636.8 586.0,636.5 584.0,636.1 582.0,635.8 580.0,635.4 578.0,635.1 576.0,634.7 574.0,634.3 572.0,633.9 570.0,633.5 568.0,633.0 566.0,632.5 564.0,631.9 562.0,631.3 560.0,630.7 558.0,630.1 556.0,629.4 554.0,628.8 552.0,628.3 550.0,627.8 548.0,627.3 546.0,626.9 544.0,626.5 542.0,626.1 540.0,625.7 538.0,625.3 536.0,624.9 534.0,624.5 532.0,624.0 530.0,623.5 528.0,622.9 526.0,622.2 524.0,621.5 522.0,620.8 520.0,620.0 518.0,619.1 516.0,618.3 514.0,617.5 512.0,616.7 510.0,615.9 508.0,615.2 506.0,614.4 504.0,613.7 502.0,613.0 500.0,612.3 498.0,611.5 496.0,610.8 494.0,610.0 492.0,609.2 490.0,608.3 488.0,607.4 486.0,606.4 484.0,605.3 482.0,604.2 480.0,603.1 478.0,601.9 476.0,600.8 474.0,599.7 472.0,598.6 470.0,597.5 468.0,596.5 466.0,595.5 464.0,594.5 462.0,593.6 460.0,592.6 458.0,591.6 456.0,590.7 454.0,589.7 452.0,588.7 450.0,587.7 448.0,586.7 446.0,585.7 444.0,584.7 442.0,583.6 440.0,582.4 438.0,581.1 436.0,579.7 434.0,578.2 432.0,576.7 430.0,575.2 428.0,573.7 426.0,572.3 424.0,570.8 422.0,569.4 420.0,568.0 418.0,566.7 416.0,565.6 414.0,564.4 412.0,563.2 410.0,561.9 408.0,560.4 406.0,558.7 404.0,556.9 402.0,555.2 400.0,553.7 398.0,552.4 396.0,551.2 394.0,550.0 392.0,548.8 390.0,547.5 388.0,546.0 386.0,544.4 384.0,542.7 382.0,541.0 380.0,539.4 378.0,537.8 376.0,536.1 374.0,534.5 372.0,532.8 370.0,531.2 368.0,529.7 366.0,528.3 364.0,526.8 362.0,525.4 360.0,523.9 358.0,522.3 356.0,520.8 354.0,519.1 352.0,517.6 350.0,516.0 348.0,514.5 346.0,513.1 344.0,511.6 342.0,510.2 340.0,508.7 338.0,507.3 336.0,505.8 334.0,504.3 332.0,502.8 330.0,501.2 328.0,499.6 326.0,497.9 324.0,496.2 322.0,494.3 320.0,492.3 318.0,490.2 316.0,488.0 314.0,485.6 312.0,482.9 310.0,479.9 308.0,476.1 306.0,471.8" fill="#8080ff" shape-rendering="crispEdges"/><polyline points="306.0,470.4 308.0,468.1 310.0,475.5 312.0,481.1 314.0,476.7 316.0,477.2 318.0,490.1 320.0,492.5 322.0,492.4 324.0,489.3 326.0,495.9 328.0,489.4 330.0,499.3 332.0,499.7 334.0,501.8 336.0,500.9 338.0,499.3 340.0,507.7 342.0,505.6 344.0,510.9 346.0,507.2 348.0,504.9 350.0,512.6 352.0,515.2 354.0,520.8 356.0,521.9 358.0,512.6 360.0,523.5 362.0,518.4 364.0,525.5 366.0,522.9 368.0,523.7 370.0,527.4 372.0,529.5 374.0,533.2 376.0,534.1 378.0,536.3 380.0,534.4 382.0,539.6 384.0,537.4 386.0,542.1 388.0,542.0 390.0,544.7 392.0,539.9 394.0,546.6 396.0,544.7 398.0,547.8 400.0,545.7 402.0,553.7 404.0,557.9 406.0,553.9 408.0,553.0 410.0,560.0 412.0,556.2 414.0,565.4 416.0,558.7 418.0,562.3 420.0,564.9 422.0,562.6 424.0,566.1 426.0,567.1 428.0,572.9 430.0,577.0 432.0,572.5 434.0,578.1 436.0,573.4 438.0,579.0 440.0,579.0 442.0,578.8 444.0,584.9 446.0,585.2 448.0,580.7 450.0,583.1 452.0,588.9 454.0,591.4 456.0,589.0 458.0,592.3 460.0,594.2 462.0,593.0 464.0,593.2 466.0,590.6 468.0,592.9 470.0,596.0 472.0,599.6 474.0,595.6 476.0,597.5 478.0,595.7 480.0,602.2 482.0,601.4 484.0,605.3 486.0,601.9 488.0,606.3 490.0,607.3 492.0,606.6 494.0,605.3 496.0,607.8 498.0,611.1 500.0,607.7 502.0,607.7 504.0,611.2 506.0,610.3 508.0,615.2 510.0,616.0 512.0,617.7 514.0,617.8 516.0,617.2 518.0,614.9 520.0,620.1 522.0,620.3 524.0,621.2 526.0,621.6 528.0,623.1 530.0,620.2 532.0,623.2 534.0,622.6 536.0,621.9 538.0,622.3 540.0,621.6 542.0,624.2 544.0,623.8 546.0,624.6 548.0,627.6 550.0,627.1 552.0,627.6 554.0,629.9 556.0,626.2 558.0,628.4 560.0,626.8 562.0,629.1 564.0,632.7 566.0,628.8 568.0,632.8 570.0,633.8 572.0,632.5 574.0,634.3 576.0,633.0 578.0,633.0 580.0,634.1 582.0,633.1 584.0,634.0 586.0,634.4 588.0,637.6 590.0,635.3 592.0,635.3 594.0,638.5 596.0,635.8 598.0,639.3 600.0,639.3 602.0,638.9 604.0,638.5 606.0,638.0 608.0,638.1 610.0,638.6 612.0,639.9 614.0,640.6 616.0,642.9 618.0,642.0 620.0,644.1 622.0,643.7 624.0,642.3 626.0,644.2 628.0,643.4 630.0,643.5 632.0,646.9 634.0,645.5 636.0,645.6 638.0,645.8 640.0,648.0 642.0,648.0 644.0,647.2 646.0,649.7 648.0,648.9 650.0,650.8 652.0,650.4 654.0,651.0 656.0,651.1 658.0,652.2 660.0,653.4 662.0,653.3 664.0,651.6 666.0,653.2 668.0,652.9 670.0,652.9 672.0,653.6 674.0,654.1 676.0,656.5 678.0,656.3 680.0,657.0 682.0,657.0 684.0,656.4 686.0,657.0 688.0,657.5 690.0,657.4 692.0,658.1 694.0,659.4 696.0,657.8 698.0,658.6 700.0,659.4 702.0,660.2 704.0,660.5 706.0,661.0 708.0,659.6 710.0,660.2 712.0,660.8 714.0,661.2 716.0,662.8 718.0,663.8 720.0,663.4 722.0,662.1 724.0,663.2 726.0,665.0 728.0,665.7 730.0,665.2 732.0,665.0 734.0,665.4 736.0,666.6 738.0,667.6 740.0,666.7 742.0,666.7 744.0,666.6 746.0,667.3 748.0,669.5 750.0,669.3 752.0,670.6 754.0,668.6 756.0,669.7 758.0,671.1 760.0,671.0 762.0,669.8 764.0,671.0 766.0,671.8 768.0,672.2 770.0,671.9 772.0,671.4 774.0,673.6 776.0,672.5 778.0,673.3 780.0,673.1 782.0,672.2 784.0,672.8 786.0,672.5 788.0,673.0 790.0,673.3 792.0,674.0 794.0,674.0 796.0,674.4 798.0,675.8 800.0,674.1 802.0,674.5 804.0,676.4 806.0,675.9 808.0,675.8 810.0,675.4 812.0,676.1 814.0,675.3 816.0,676.8 818.0,676.8 820.0,675.6 822.0,674.9 824.0,677.1 826.0,676.0 828.0,677.1 830.0,677.8 832.0,678.0 834.0,678.4 836.0,677.8 838.0,678.7 840.0,677.9 842.0,677.5 844.0,678.0 846.0,677.6 848.0,678.6 850.0,678.8 852.0,677.2 854.0,677.3 856.0,677.9 858.0,678.1 860.0,679.4 862.0,679.4 864.0,679.6 866.0,679.2 868.0,679.3 870.0,678.5 872.0,678.9 874.0,678.4 876.0,680.4 878.0,679.4 880.0,679.1 882.0,679.5 884.0,679.4 886.0,680.1 888.0,678.2 890.0,678.4 892.0,679.6 894.0,679.2 896.0,678.5 898.0,678.2 900.0,677.4 902.0,678.8 904.0,678.7 906.0,678.3 908.0,677.8 910.0,678.1 912.0,678.8 914.0,678.9 916.0,678.6 918.0,679.6 920.0,679.9 922.0,679.8 924.0,680.2 926.0,680.3 928.0,680.6 930.0,681.3 932.0,681.3 934.0,680.8 936.0,682.3 938.0,681.9 940.0,681.9 942.0,682.6 944.0,682.8 946.0,683.2 948.0,683.2 950.0,683.1 952.0,683.3 954.0,682.3" fill="none" stroke="#8080ff" stroke-width="1" shape-rendering="crispEdges"/><polyline points="307.0,472.4 309.0,470.0 311.0,473.4 313.0,474.2 315.0,480.9 317.0,477.7 319.0,489.2 321.0,492.6 323.0,494.9 325.0,487.5 327.0,496.5 329.0,501.0 331.0,491.3 333.0,495.1 335.0,497.7 337.0,501.8 339.0,499.3 341.0,505.9 343.0,504.7 345.0,510.4 347.0,510.2 349.0,513.7 351.0,509.4 353.0,517.1 355.0,519.1 357.0,520.5 359.0,513.6 361.0,526.5 363.0,523.2 365.0,520.8 367.0,524.4 369.0,526.9 371.0,528.5 373.0,526.8 375.0,528.7 377.0,531.6 379.0,538.4 381.0,535.9 383.0,532.9 385.0,539.5 387.0,538.2 389.0,537.6 391.0,550.2 393.0,543.6 395.0,547.6 397.0,546.8 399.0,544.8 401.0,555.5 403.0,557.5 405.0,551.2 407.0,555.5 409.0,556.7 411.0,556.0 413.0,562.4 415.0,564.8 417.0,565.7 419.0,566.1 421.0,560.9 423.0,564.4 425.0,568.7 427.0,572.1 429.0,570.5 431.0,572.6 433.0,577.8 435.0,571.6 437.0,575.4 439.0,577.0 441.0,584.8 443.0,578.8 445.0,578.3 447.0,582.7 449.0,585.8 451.0,582.4 453.0,589.6 455.0,584.9 457.0,590.3 459.0,586.6 461.0,593.8 463.0,588.9 465.0,594.4 467.0,596.3 469.0,592.4 471.0,592.2 473.0,597.3 475.0,597.8 477.0,598.8 479.0,602.4 481.0,601.0 483.0,602.4 485.0,603.4 487.0,604.2 489.0,604.8 491.0,603.8 493.0,605.7 495.0,606.3 497.0,607.0 499.0,611.8 501.0,607.5 503.0,609.0 505.0,612.1 507.0,611.2 509.0,611.5 511.0,613.2 513.0,615.0 515.0,617.0 517.0,619.9 519.0,619.9 521.0,617.8 523.0,618.8 525.0,619.3 527.0,618.8 529.0,624.2 531.0,618.9 533.0,620.3 535.0,623.8 537.0,623.8 539.0,622.2 541.0,626.8 543.0,623.9 545.0,625.4 547.0,622.8 549.0,628.1 551.0,623.9 553.0,626.2 555.0,629.6 557.0,630.6 559.0,630.9 561.0,631.1 563.0,628.6 565.0,628.2 567.0,631.0 569.0,629.6 571.0,634.5 573.0,630.3 575.0,632.3 577.0,632.1 579.0,631.7 581.0,634.3 583.0,632.8 585.0,636.7 587.0,636.2 589.0,635.3 591.0,637.6 593.0,637.8 595.0,636.3 597.0,638.7 599.0,639.4 601.0,638.6 603.0,638.0 605.0,640.4 607.0,641.0 609.0,639.2 611.0,638.7 613.0,642.0 615.0,641.7 617.0,640.7 619.0,642.4 621.0,642.0 623.0,644.6 625.0,643.2 627.0,643.2 629.0,643.3 631.0,644.8 633.0,647.3 635.0,645.4 637.0,646.7 639.0,648.7 641.0,646.4 643.0,647.7 645.0,649.8 647.0,648.2 649.0,651.0 651.0,651.2 653.0,649.7 655.0,651.3 657.0,651.6 659.0,652.4 661.0,651.7 663.0,652.3 665.0,652.3 667.0,652.8 669.0,652.9 671.0,655.3 673.0,655.7 675.0,654.6 677.0,656.0 679.0,655.8 681.0,655.7 683.0,656.3 685.0,658.3 687.0,657.0 689.0,658.0 691.0,659.4 693.0,657.9 695.0,659.6 697.0,658.0 699.0,660.0 701.0,660.5 703.0,660.8 705.0,661.5 707.0,661.1 709.0,662.1 711.0,660.6 713.0,661.6 715.0,661.2 717.0,661.2 719.0,662.6 721.0,663.7 723.0,664.3 725.0,662.7 727.0,665.5 729.0,664.1 731.0,664.7 733.0,666.5 735.0,667.0 737.0,667.1 739.0,666.4 741.0,667.2 743.0,668.5 745.0,667.7 747.0,669.2 749.0,669.5 751.0,669.1 753.0,670.5 755.0,669.5 757.0,670.8 759.0,670.8 761.0,670.4 763.0,671.2 765.0,671.6 767.0,671.7 769.0,670.9 771.0,673.3 773.0,673.5 775.0,671.4 777.0,673.8 779.0,673.0 781.0,672.2 783.0,674.1 785.0,673.3 787.0,674.2 789.0,674.7 791.0,674.2 793.0,673.2 795.0,675.4 797.0,675.3 799.0,676.1 801.0,674.8 803.0,676.3 805.0,676.7 807.0,675.6 809.0,675.8 811.0,675.6 813.0,674.8 815.0,675.4 817.0,675.6 819.0,675.1 821.0,676.6 823.0,676.0 825.0,676.5 827.0,676.1 829.0,676.5 831.0,677.7 833.0,677.4 835.0,677.9 837.0,677.7 839.0,678.1 841.0,678.9 843.0,677.5 845.0,678.0 847.0,678.4 849.0,677.1 851.0,679.1 853.0,678.0 855.0,677.5 857.0,678.8 859.0,679.0 861.0,678.7 863.0,679.4 865.0,677.7 867.0,678.9 869.0,679.5 871.0,680.0 873.0,679.6 875.0,679.8 877.0,679.6 879.0,680.1 881.0,680.1 883.0,680.8 885.0,680.4 887.0,680.0 889.0,680.1 891.0,677.9 893.0,679.1 895.0,678.2 897.0,678.7 899.0,677.6 901.0,677.9 903.0,678.8 905.0,677.2 907.0,678.0 909.0,678.6 911.0,679.6 913.0,678.7 915.0,680.1 917.0,679.1 919.0,679.5 921.0,680.2 923.0,680.6 925.0,681.3 927.0,681.5 929.0,680.4 931.0,681.7 933.0,681.6 935.0,681.3 937.0,682.3 939.0,682.7 941.0,682.0 943.0,683.1 945.0,681.6 947.0,681.8 949.0,683.2 951.0,682.4 953.0,683.1 955.0,683.0" fill="none" stroke="#8080ff" stroke-width="1" shape-rendering="crispEdges"/><polyline points="306.0,462.0 308.0,475.4 310.0,479.0 312.0,473.2 314.0,477.6 316.0,488.0 318.0,491.9 320.0,493.4 322.0,490.0 324.0,490.0 326.0,492.9 328.0,490.8 330.0,496.9 332.0,494.8 334.0,495.4 336.0,500.0 338.0,497.1 340.0,504.2 342.0,508.8 344.0,509.6 346.0,515.4 348.0,515.7 350.0,513.8 352.0,518.9 354.0,514.4 356.0,520.7 358.0,515.6 360.0,520.3 362.0,527.7 364.0,524.3 366.0,524.6 368.0,529.6 370.0,525.2 372.0,533.2 374.0,524.8 376.0,529.3 378.0,530.2 380.0,532.9 382.0,542.8 384.0,533.6 386.0,538.5 388.0,543.4 390.0,546.3 392.0,548.5 394.0,545.3 396.0,544.7 398.0,552.9 400.0,546.2 402.0,547.2 404.0,550.8 406.0,555.4 408.0,561.9 410.0,561.2 412.0,560.8 414.0,561.6 416.0,564.5 418.0,565.0 420.0,563.4 422.0,562.3 424.0,564.9 426.0,572.1 428.0,572.1 430.0,575.2 432.0,569.4 434.0,579.1 436.0,575.7 438.0,582.3 440.0,580.5 442.0,581.2 444.0,584.8 446.0,584.1 448.0,585.6 450.0,581.9 452.0,587.0 454.0,585.8 456.0,584.3 458.0,585.8 460.0,589.8 462.0,588.9 464.0,594.2 466.0,589.8 468.0,589.9 470.0,599.1 472.0,594.5 474.0,597.3 476.0,596.0 478.0,597.2 480.0,599.9 482.0,604.1 484.0,599.3 486.0,606.7 488.0,608.9 490.0,606.5 492.0,605.8 494.0,605.7 496.0,606.1 498.0,608.0 500.0,612.7 502.0,607.1 504.0,613.6 506.0,613.5 508.0,609.5 510.0,610.7 512.0,616.2 514.0,616.6 516.0,614.9 518.0,619.6 520.0,615.9 522.0,618.2 524.0,616.8 526.0,621.2 528.0,618.1 530.0,619.4 532.0,623.8 534.0,622.5 536.0,624.0 538.0,624.9 540.0,624.5 542.0,622.3 544.0,625.9 546.0,622.7 548.0,624.1 550.0,625.7 552.0,624.3 554.0,624.9 556.0,628.6 558.0,629.7 560.0,628.3 562.0,629.1 564.0,628.8 566.0,631.0 568.0,631.9 570.0,634.2 572.0,630.2 574.0,634.9 576.0,635.6 578.0,633.0 580.0,635.1 582.0,635.9 584.0,635.5 586.0,634.3 588.0,636.1 590.0,637.5 592.0,634.8 594.0,636.7 596.0,635.3 598.0,638.9 600.0,639.0 602.0,636.6 604.0,639.6 606.0,639.8 608.0,638.2 610.0,640.1 612.0,641.1 614.0,640.3 616.0,641.4 618.0,643.6 620.0,642.9 622.0,643.0 624.0,642.0 626.0,642.7 628.0,645.6 630.0,645.8 632.0,646.6 634.0,646.3 636.0,646.8 638.0,647.1 640.0,648.3 642.0,647.6 644.0,648.6 646.0,649.0 648.0,650.0 650.0,649.2 652.0,649.1 654.0,649.7 656.0,650.4 658.0,652.7 660.0,652.7 662.0,653.1 664.0,652.7 666.0,652.1 668.0,653.5 670.0,655.0 672.0,654.4 674.0,655.2 676.0,654.9 678.0,654.7 680.0,656.4 682.0,656.4 684.0,656.5 686.0,656.6 688.0,658.2 690.0,657.5 692.0,658.5 694.0,658.0 696.0,659.6 698.0,658.9 700.0,659.4 702.0,660.9 704.0,660.6 706.0,661.0 708.0,660.2 710.0,661.9 712.0,661.1 714.0,663.0 716.0,663.2 718.0,662.9 720.0,663.8 722.0,663.5 724.0,664.4 726.0,663.2 728.0,665.9 730.0,665.8 732.0,664.5 734.0,665.2 736.0,666.4 738.0,667.3 740.0,666.2 742.0,668.7 744.0,667.5 746.0,669.5 748.0,669.3 750.0,669.0 752.0,669.0 754.0,668.7 756.0,669.0 758.0,670.7 760.0,671.3 762.0,672.0 764.0,670.9 766.0,672.6 768.0,671.3 770.0,673.1 772.0,673.3 774.0,671.6 776.0,673.5 778.0,673.3 780.0,673.5 782.0,674.0 784.0,673.5 786.0,673.6 788.0,673.5 790.0,674.9 792.0,675.2 794.0,673.6 796.0,675.4 798.0,674.5 800.0,674.5 802.0,674.8 804.0,675.9 806.0,675.3 808.0,675.3 810.0,675.0 812.0,675.6 814.0,676.6 816.0,674.9 818.0,676.0 820.0,676.2 822.0,675.0 824.0,675.7 826.0,677.4 828.0,677.9 830.0,677.8 832.0,676.5 834.0,678.2 836.0,677.7 838.0,677.2 840.0,678.0 842.0,679.0 844.0,678.9 846.0,677.8 848.0,677.0 850.0,678.9 852.0,679.1 854.0,678.1 856.0,677.5 858.0,678.3 860.0,678.8 862.0,678.4 864.0,678.3 866.0,678.2 868.0,678.4 870.0,678.0 872.0,678.6 874.0,680.5 876.0,678.6 878.0,680.4 880.0,680.6 882.0,679.7 884.0,680.0 886.0,679.0 888.0,679.7 890.0,679.5 892.0,679.2 894.0,678.4 896.0,679.2 898.0,678.8 900.0,678.2 902.0,678.4 904.0,677.7 906.0,679.3 908.0,678.8 910.0,679.6 912.0,678.6 914.0,680.3 916.0,678.7 918.0,679.8 920.0,679.2 922.0,679.6 924.0,681.0 926.0,679.7 928.0,680.6 930.0,680.4 932.0,682.0 934.0,680.6 936.0,681.3 938.0,682.6 940.0,682.4 942.0,682.6 944.0,683.3 946.0,681.5 948.0,682.9 950.0,683.2 952.0,683.3 954.0,683.4" fill="none" stroke="#8080ff" stroke-width="1" shape-rendering="crispEdges"/><polyline points="307.0,463.0 309.0,467.4 311.0,481.0 313.0,481.5 315.0,478.9 317.0,477.6 319.0,487.4 321.0,483.1 323.0,494.5 325.0,490.5 327.0,498.9 329.0,490.5 331.0,497.7 333.0,493.8 335.0,504.8 337.0,503.2 339.0,500.2 341.0,511.7 343.0,509.3 345.0,506.1 347.0,514.5 349.0,509.6 351.0,518.7 353.0,511.7 355.0,522.4 357.0,511.9 359.0,522.3 361.0,518.1 363.0,521.3 365.0,525.5 367.0,519.5 369.0,523.3 371.0,523.4 373.0,532.9 375.0,528.2 377.0,533.3 379.0,532.9 381.0,533.5 383.0,543.5 385.0,540.1 387.0,543.4 389.0,545.6 391.0,548.4 393.0,543.3 395.0,542.5 397.0,548.0 399.0,546.1 401.0,545.9 403.0,557.4 405.0,555.9 407.0,555.4 409.0,554.2 411.0,562.2 413.0,561.1 415.0,558.6 417.0,568.0 419.0,568.9 421.0,569.9 423.0,570.3 425.0,568.9 427.0,568.1 429.0,573.0 431.0,569.7 433.0,575.7 435.0,572.0 437.0,573.0 439.0,581.0 441.0,578.7 443.0,583.2 445.0,585.0 447.0,586.5 449.0,585.5 451.0,588.6 453.0,588.0 455.0,591.3 457.0,592.0 459.0,585.5 461.0,588.5 463.0,590.5 465.0,590.3 467.0,590.7 469.0,597.6 471.0,591.6 473.0,594.0 475.0,599.9 477.0,596.7 479.0,598.1 481.0,605.0 483.0,604.5 485.0,603.1 487.0,601.7 489.0,603.7 491.0,610.2 493.0,609.5 495.0,604.9 497.0,610.5 499.0,608.7 501.0,612.0 503.0,609.6 505.0,609.2 507.0,609.1 509.0,611.9 511.0,616.7 513.0,617.7 515.0,617.1 517.0,618.4 519.0,615.3 521.0,617.3 523.0,621.8 525.0,623.2 527.0,620.2 529.0,623.1 531.0,624.7 533.0,625.6 535.0,621.4 537.0,624.2 539.0,622.9 541.0,623.8 543.0,624.2 545.0,623.5 547.0,622.4 549.0,627.3 551.0,627.4 553.0,628.8 555.0,625.5 557.0,626.6 559.0,629.2 561.0,631.7 563.0,629.9 565.0,629.1 567.0,631.7 569.0,634.0 571.0,634.0 573.0,634.6 575.0,632.7 577.0,632.4 579.0,635.6 581.0,635.6 583.0,636.2 585.0,634.6 587.0,634.5 589.0,634.8 591.0,637.7 593.0,638.2 595.0,636.5 597.0,638.8 599.0,637.3 601.0,637.9 603.0,638.8 605.0,637.9 607.0,638.5 609.0,638.9 611.0,639.4 613.0,640.7 615.0,639.8 617.0,642.6 619.0,641.1 621.0,642.5 623.0,643.7 625.0,642.5 627.0,643.9 629.0,645.0 631.0,645.4 633.0,647.0 635.0,647.2 637.0,645.6 639.0,648.3 641.0,648.0 643.0,648.9 645.0,647.8 647.0,649.2 649.0,650.3 651.0,651.1 653.0,651.5 655.0,650.3 657.0,652.4 659.0,652.1 661.0,652.7 663.0,653.6 665.0,652.8 667.0,654.6 669.0,654.8 671.0,655.0 673.0,654.3 675.0,655.1 677.0,654.6 679.0,656.6 681.0,657.3 683.0,655.8 685.0,657.7 687.0,658.0 689.0,656.6 691.0,659.3 693.0,658.4 695.0,658.2 697.0,657.8 699.0,660.1 701.0,659.2 703.0,660.0 705.0,659.4 707.0,660.8 709.0,660.6 711.0,662.0 713.0,662.0 715.0,662.5 717.0,661.7 719.0,661.6 721.0,664.1 723.0,664.7 725.0,664.3 727.0,665.5 729.0,665.3 731.0,665.5 733.0,665.4 735.0,665.7 737.0,666.4 739.0,666.2 741.0,667.1 743.0,667.7 745.0,666.9 747.0,668.2 749.0,668.3 751.0,669.5 753.0,670.3 755.0,670.1 757.0,670.6 759.0,670.8 761.0,670.2 763.0,670.8 765.0,672.2 767.0,672.7 769.0,671.1 771.0,670.9 773.0,673.5 775.0,673.4 777.0,673.0 779.0,673.7 781.0,673.3 783.0,674.3 785.0,672.9 787.0,673.6 789.0,674.3 791.0,673.4 793.0,674.9 795.0,674.0 797.0,675.4 799.0,675.9 801.0,675.2 803.0,676.8 805.0,676.1 807.0,676.5 809.0,674.8 811.0,675.1 813.0,676.5 815.0,677.0 817.0,676.3 819.0,677.0 821.0,675.0 823.0,677.0 825.0,677.2 827.0,676.9 829.0,676.7 831.0,677.6 833.0,676.8 835.0,678.1 837.0,678.3 839.0,678.1 841.0,677.4 843.0,676.9 845.0,677.3 847.0,678.8 849.0,677.3 851.0,677.0 853.0,677.5 855.0,678.1 857.0,678.4 859.0,679.1 861.0,679.2 863.0,679.6 865.0,679.5 867.0,678.7 869.0,678.1 871.0,680.1 873.0,678.7 875.0,679.9 877.0,679.3 879.0,680.7 881.0,679.3 883.0,679.7 885.0,679.1 887.0,680.2 889.0,679.4 891.0,679.1 893.0,678.2 895.0,677.6 897.0,678.9 899.0,678.6 901.0,678.5 903.0,679.1 905.0,678.3 907.0,677.7 909.0,678.9 911.0,678.4 913.0,679.2 915.0,679.3 917.0,679.8 919.0,680.8 921.0,680.7 923.0,680.1 925.0,681.2 927.0,681.5 929.0,681.5 931.0,681.3 933.0,682.2 935.0,681.5 937.0,680.9 939.0,681.5 941.0,682.4 943.0,682.0 945.0,682.2 947.0,682.3 949.0,682.0 951.0,682.0 953.0,682.0 955.0,683.3" fill="none" stroke="#8080ff" stroke-width="1" shape-rendering="crispEdges"/><polyline points="306.0,464.6 308.0,471.0 310.0,481.9 312.0,480.3 314.0,485.7 316.0,487.4 318.0,492.5 320.0,481.7 322.0,488.3 324.0,498.3 326.0,493.1 328.0,501.7 330.0,492.6 332.0,492.4 334.0,505.7 336.0,500.4 338.0,503.2 340.0,510.6 342.0,502.2 344.0,513.9 346.0,507.6 348.0,507.1 350.0,508.4 352.0,513.8 354.0,514.7 356.0,521.9 358.0,512.6 360.0,514.1 362.0,517.0 364.0,524.4 366.0,528.0 368.0,525.7 370.0,528.9 372.0,530.9 374.0,524.9 376.0,529.4 378.0,540.2 380.0,533.8 382.0,542.8 384.0,539.1 386.0,537.6 388.0,536.7 390.0,540.8 392.0,543.3 394.0,545.9 396.0,547.2 398.0,549.6 400.0,550.1 402.0,546.9 404.0,551.2 406.0,560.4 408.0,552.2 410.0,561.2 412.0,559.9 414.0,563.5 416.0,560.8 418.0,562.4 420.0,565.2 422.0,570.5 424.0,566.1 426.0,565.3 428.0,566.3 430.0,576.0 432.0,572.0 434.0,571.7 436.0,577.8 438.0,581.5 440.0,580.5 442.0,577.6 444.0,581.0 446.0,580.8 448.0,579.6 450.0,589.2 452.0,585.7 454.0,583.8 456.0,591.4 458.0,593.3 460.0,592.7 462.0,588.9 464.0,589.3 466.0,593.2 468.0,594.7 470.0,598.2 472.0,599.9 474.0,600.6 476.0,597.1 478.0,600.2 480.0,597.7 482.0,602.0 484.0,599.6 486.0,601.0 488.0,602.1 490.0,604.5 492.0,605.4 494.0,609.3 496.0,605.3 498.0,606.4 500.0,611.2 502.0,612.1 504.0,613.1 506.0,613.9 508.0,614.2 510.0,614.1 512.0,616.3 514.0,612.4 516.0,614.2 518.0,618.7 520.0,615.8 522.0,618.9 524.0,617.8 526.0,619.7 528.0,623.1 530.0,622.6 532.0,621.7 534.0,621.0 536.0,625.0 538.0,624.4 540.0,623.4 542.0,626.5 544.0,625.8 546.0,628.0 548.0,626.5 550.0,628.4 552.0,626.8 554.0,628.3 556.0,629.7 558.0,626.1 560.0,628.9 562.0,630.3 564.0,628.0 566.0,632.4 568.0,632.6 570.0,634.2 572.0,631.8 574.0,632.8 576.0,635.2 578.0,633.3 580.0,635.6 582.0,634.1 584.0,634.2 586.0,634.3 588.0,634.4 590.0,635.7 592.0,635.1 594.0,638.1 596.0,639.0 598.0,636.0 600.0,636.3 602.0,636.5 604.0,640.3 606.0,637.6 608.0,640.2 610.0,639.3 612.0,639.4 614.0,640.0 616.0,642.1 618.0,640.3 620.0,643.7 622.0,643.2 624.0,642.6 626.0,643.0 628.0,645.0 630.0,645.4 632.0,644.9 634.0,645.5 636.0,646.4 638.0,648.3 640.0,647.7 642.0,649.1 644.0,649.0 646.0,649.2 648.0,649.5 650.0,650.5 652.0,650.4 654.0,651.5 656.0,650.4 658.0,651.2 660.0,653.1 662.0,652.2 664.0,653.8 666.0,654.4 668.0,653.8 670.0,652.9 672.0,655.1 674.0,655.3 676.0,654.7 678.0,656.6 680.0,656.0 682.0,655.3 684.0,655.7 686.0,656.5 688.0,657.9 690.0,658.8 692.0,657.3 694.0,657.4 696.0,659.3 698.0,659.0 700.0,659.3 702.0,660.6 704.0,661.2 706.0,661.6 708.0,661.4 710.0,659.7 712.0,660.4 714.0,662.0 716.0,663.3 718.0,661.4 720.0,663.0 722.0,663.1 724.0,663.5 726.0,663.6 728.0,664.0 730.0,664.3 732.0,664.4 734.0,666.0 736.0,666.1 738.0,667.2 740.0,667.4 742.0,668.6 744.0,667.5 746.0,669.2 748.0,668.4 750.0,669.4 752.0,670.1 754.0,669.4 756.0,669.9 758.0,670.7 760.0,669.7 762.0,671.0 764.0,670.2 766.0,670.8 768.0,672.1 770.0,673.2 772.0,673.5 774.0,671.8 776.0,671.7 778.0,672.9 780.0,672.9 782.0,672.9 784.0,674.1 786.0,674.1 788.0,674.0 790.0,674.3 792.0,674.4 794.0,674.9 796.0,675.8 798.0,676.1 800.0,676.4 802.0,676.4 804.0,674.7 806.0,675.7 808.0,676.6 810.0,675.5 812.0,676.3 814.0,674.9 816.0,675.3 818.0,675.8 820.0,675.0 822.0,675.9 824.0,675.6 826.0,677.3 828.0,676.3 830.0,676.7 832.0,678.0 834.0,677.7 836.0,676.8 838.0,677.3 840.0,678.3 842.0,677.3 844.0,677.4 846.0,678.3 848.0,678.0 850.0,677.5 852.0,678.1 854.0,678.4 856.0,677.1 858.0,677.7 860.0,677.9 862.0,679.3 864.0,677.6 866.0,678.4 868.0,678.2 870.0,679.4 872.0,679.9 874.0,678.5 876.0,680.5 878.0,680.3 880.0,679.4 882.0,680.9 884.0,679.3 886.0,680.2 888.0,678.4 890.0,678.9 892.0,678.7 894.0,679.3 896.0,678.9 898.0,678.2 900.0,677.0 902.0,677.9 904.0,677.9 906.0,679.4 908.0,678.9 910.0,678.5 912.0,678.7 914.0,679.8 916.0,678.7 918.0,680.4 920.0,680.4 922.0,680.1 924.0,680.9 926.0,680.4 928.0,680.1 930.0,680.9 932.0,680.3 934.0,680.6 936.0,681.5 938.0,682.5 940.0,681.4 942.0,682.2 944.0,683.3 946.0,683.1 948.0,683.4 950.0,683.1 952.0,683.0 954.0,683.1" fill="none" stroke="#8080ff" stroke-width="1" shape-rendering="crispEdges"/><polyline points="73.0,307.7 76.0,311.1 79.0,318.1 82.0,319.7 85.0,327.4 88.0,328.0 91.0,327.0 94.0,330.0 97.0,339.5 100.0,334.7 103.0,352.0 106.0,338.2 109.0,336.7 112.0,337.0 115.0,352.0 118.0,338.1 121.0,347.5 124.0,353.6 127.0,344.1 130.0,356.5 133.0,355.4 136.0,347.7 139.0,352.6 142.0,350.7 145.0,351.0 148.0,361.0 151.0,351.0 154.0,354.3 157.0,354.4 160.0,357.0 163.0,360.7 166.0,375.6 169.0,361.4 172.0,364.8 175.0,374.2 178.0,379.1 181.0,384.0 184.0,370.0 187.0,373.9 190.0,378.9 193.0,372.9 196.0,378.4 199.0,376.0 202.0,388.1 205.0,381.3 208.0,382.5 211.0,400.2" fill="none" stroke="#8080ff" stroke-width="1" shape-rendering="crispEdges"/><polyline points="74.5,309.4 77.5,312.6 80.5,316.9 83.5,322.7 86.5,322.3 89.5,327.3 92.5,336.1 95.5,333.4 98.5,335.3 101.5,347.2 104.5,344.9 107.5,335.8 110.5,353.1 113.5,341.5 116.5,356.3 119.5,339.1 122.5,340.0 125.5,358.1 128.5,342.2 131.5,350.8 134.5,346.0 137.5,360.5 140.5,346.3 143.5,346.9 146.5,348.8 149.5,349.3 152.5,357.4 155.5,352.5 158.5,352.9 161.5,367.2 164.5,364.7 167.5,375.9 170.5,362.8 173.5,379.1 176.5,377.4 179.5,379.2 182.5,370.3 185.5,383.4 188.5,372.0 191.5,375.8 194.5,390.3 197.5,377.1 200.5,376.0 203.5,378.2 206.5,391.2 209.5,394.0 212.5,390.6" fill="none" stroke="#8080ff" stroke-width="1" shape-rendering="crispEdges"/><polyline points="255.0,430.8 257.5,434.8 260.0,436.6 262.5,437.1 265.0,439.1 267.5,445.2 270.0,447.4 272.5,447.2 275.0,444.5 277.5,446.4 280.0,447.4 282.5,445.1 285.0,444.2 287.5,447.6 290.0,447.9" fill="none" stroke="#8080ff" stroke-width="1" shape-rendering="crispEdges"/><polyline points="178.5,322 178.5,305 179.5,304 179.5,274 179.5,304 180.5,305 180.5,322" fill="none" stroke="#9a9880" stroke-width="1" shape-rendering="crispEdges"/><polyline points="769.5,671 769.5,554 770.5,553 770.5,436 770.5,553 771.5,554 771.5,671" fill="none" stroke="#9a9880" stroke-width="1" shape-rendering="crispEdges"/><polyline points="820.5,675 820.5,512 821.5,511 821.5,458 821.5,511 822.5,512 822.5,675" fill="none" stroke="#9a9880" stroke-width="1" shape-rendering="crispEdges"/><polyline points="845.5,677 845.5,529 846.5,528 846.5,479 846.5,528 847.5,529 847.5,677" fill="none" stroke="#9a9880" stroke-width="1" shape-rendering="crispEdges"/><polyline points="849.5,677 849.5,520 850.5,519 850.5,469 850.5,519 851.5,520 851.5,677" fill="none" stroke="#9a9880" stroke-width="1" shape-rendering="crispEdges"/><polyline points="870.5,679 870.5,576 871.5,575 871.5,472 871.5,575 872.5,576 872.5,679" fill="none" stroke="#9a9880" stroke-width="1" shape-rendering="crispEdges"/><polyline points="931.5,680 931.5,555 932.5,554 932.5,435 932.5,554 933.5,555 933.5,680" fill="none" stroke="#9a9880" stroke-width="1" shape-rendering="crispEdges"/><polyline points="966.5,684 966.5,555 967.5,554 967.5,431 967.5,554 968.5,555 968.5,684" fill="none" stroke="#9a9880" stroke-width="1" shape-rendering="crispEdges"/><polyline points="979.5,684 979.5,438 980.5,437 980.5,352 980.5,437 981.5,438 981.5,684" fill="none" stroke="#9a9880" stroke-width="1" shape-rendering="crispEdges"/><polyline points="990.5,684 990.5,550 991.5,549 991.5,418 991.5,549 992.5,550 992.5,684" fill="none" stroke="#9a9880" stroke-width="1" shape-rendering="crispEdges"/><polyline points="1003.5,684 1003.5,550 1004.5,549 1004.5,414 1004.5,549 1005.5,550 1005.5,684" fill="none" stroke="#9a9880" stroke-width="1" shape-rendering="crispEdges"/><rect x="282" y="338" width="1" height="105" fill="#9a9880"/><rect x="284" y="339" width="1" height="104" fill="#9a9880"/><rect x="285" y="343" width="1" height="100" fill="#9a9880"/><rect x="282" y="376" width="4" height="67" fill="#9a9880"/><rect x="281" y="400" width="1" height="40" fill="#9a9880"/><polyline points="72.5,311.7 74.2,303.3 75.8,303.9 77.4,310.0 79.0,305.0 80.7,298.1 82.3,301.0 83.9,300.3 85.5,294.0 87.2,294.7 88.8,303.9 90.4,307.4 92.0,302.5 93.8,305.3 95.5,314.6 97.2,316.9 98.9,317.0 100.5,326.7 102.2,324.5 103.8,331.0 105.4,329.2 107.0,318.0 108.7,315.5 110.3,324.7 112.5,322.7 114.8,313.0 117.1,319.4 119.4,335.0 121.7,334.9 124.0,324.7 126.2,323.2 128.5,331.0 130.4,328.6 132.4,316.9 133.7,320.7 135.0,328.6 136.7,327.6 138.3,315.6 140.6,318.2 142.8,326.0 144.8,325.5 146.7,319.5 148.6,313.5 150.6,315.6 152.3,317.3 154.1,305.4 155.8,307.8 157.8,316.8 159.8,319.5 161.2,316.0 162.6,324.0 164.6,336.3 166.5,339.5 168.4,329.4 170.4,330.0 172.4,343.2 174.3,348.6 176.2,333.3 178.2,322.6 180.1,332.3 182.0,338.0 183.3,338.1 184.7,347.3 186.6,344.4 188.6,334.0 190.6,347.2 192.5,368.0 194.2,362.3 195.8,350.0 197.8,350.6 199.7,360.6 201.7,360.0 203.4,362.3 205.2,376.2 206.9,376.0 209.2,370.6 211.4,370.7 213.1,379.2 214.7,376.0 216.3,368.6 218.0,372.0 220.2,380.0 222.5,381.0 224.2,373.9 226.0,377.0 227.5,385.8 229.0,386.0 230.8,383.1 232.6,388.0 234.2,401.2 235.9,403.9 237.5,401.1 239.1,409.0 240.1,406.6 241.0,398.6 242.7,398.7 244.3,410.0 245.7,407.1 247.0,400.0 248.5,403.8 250.0,411.7 251.7,413.7 253.4,407.8 255.4,419.5 257.3,437.7 258.3,432.9 259.3,420.8 261.6,418.8 263.9,424.7 265.6,430.7 267.3,423.4 269.0,431.2 270.8,435.8 272.5,425.7 274.3,428.0 276.1,430.6 277.9,422.3 279.8,429.2 281.6,422.2 283.4,425.3 285.7,435.0 288.0,435.0 289.0,438.9 290.0,446.8 291.2,455.0 292.5,453.0 294.1,450.1 295.8,460.5 297.4,456.0 299.0,461.0 300.9,467.2 302.9,461.8 304.9,472.3 306.8,469.0 308.0,472.1 310.0,474.2 312.0,480.3 314.0,481.8 316.0,481.4 318.0,485.4 320.0,487.9 322.0,492.6 324.0,490.8 326.0,493.4 328.0,498.1 330.0,496.6 332.0,500.5 334.0,497.8 336.0,501.0 338.0,501.3 340.0,506.8 342.0,506.4 344.0,506.0 346.0,506.7 348.0,510.0 350.0,509.8 352.0,513.5 354.0,516.4 356.0,515.8 358.0,516.6 360.0,519.3 362.0,519.7 364.0,524.8 366.0,522.3 368.0,527.2 370.0,526.6 372.0,530.3 374.0,532.2 376.0,530.5 378.0,535.5 380.0,538.1 382.0,537.8 384.0,539.9 386.0,540.0 388.0,540.8 390.0,545.2 392.0,547.0 394.0,545.1 396.0,545.9 398.0,548.3 400.0,551.0 402.0,551.3 404.0,556.0 406.0,556.9 408.0,559.2 410.0,559.2 412.0,561.3 414.0,563.5 416.0,560.3 418.0,564.1 420.0,563.5 422.0,567.8 424.0,566.6 426.0,570.5 428.0,570.0 430.0,573.0 432.0,574.6 434.0,577.2 436.0,578.5 438.0,578.0 440.0,580.5 442.0,579.4 444.0,580.1 446.0,583.9 448.0,585.8 450.0,586.1 452.0,586.1 454.0,587.6 456.0,589.0 458.0,589.3 460.0,589.4 462.0,592.5 464.0,591.4 466.0,594.7 468.0,595.2 470.0,596.2 472.0,597.5 474.0,599.2 476.0,600.4 478.0,599.5 480.0,600.2 482.0,602.8 484.0,604.9 486.0,604.6 488.0,603.1 490.0,604.1 492.0,606.7 494.0,608.9 496.0,610.1 498.0,608.8 500.0,610.1 502.0,610.8 504.0,609.9 506.0,610.3 508.0,613.1 510.0,613.8 512.0,615.9 514.0,614.2 516.0,617.5 518.0,616.2 520.0,618.0 522.0,619.5 524.0,618.2 526.0,621.9 528.0,622.6 530.0,623.2 532.0,620.2 534.0,623.1 536.0,623.6 538.0,624.8 540.0,622.8 542.0,622.9 544.0,625.7 546.0,624.2 548.0,624.0 550.0,624.6 552.0,627.0 554.0,627.3 556.0,628.6 558.0,629.4 560.0,627.4 562.0,631.1 564.0,631.6 566.0,632.4 568.0,632.4 570.0,631.6 572.0,631.6 574.0,634.2 576.0,633.1 578.0,633.7 580.0,634.7 582.0,635.1 584.0,635.5 586.0,635.6 588.0,635.6 590.0,636.8 592.0,636.1 594.0,636.1 596.0,638.4 598.0,638.6 600.0,638.6 602.0,637.3 604.0,637.4 606.0,640.4 608.0,640.9 610.0,639.3 612.0,640.8 614.0,639.5 616.0,641.1 618.0,642.5 620.0,642.0 622.0,643.8 624.0,644.7 626.0,642.9 628.0,645.0 630.0,644.6 632.0,644.6 634.0,645.6 636.0,646.5 638.0,648.2 640.0,648.3 642.0,646.7 644.0,647.3 646.0,650.5 648.0,649.7 650.0,650.3 652.0,650.0 654.0,651.8 656.0,651.4 658.0,651.9 660.0,651.3 662.0,653.2 664.0,652.0 666.0,652.2 668.0,653.9 670.0,654.9 672.0,653.8 674.0,654.3 676.0,654.3 678.0,655.9 680.0,656.8 682.0,655.4 684.0,657.0 686.0,657.4 688.0,656.6 690.0,658.1 692.0,657.7 694.0,657.8 696.0,660.3 698.0,658.1 700.0,659.1 702.0,660.1 704.0,659.8 706.0,659.1 708.0,661.7 710.0,658.0 712.0,661.1 714.0,662.8 716.0,663.4 718.0,663.6 720.0,662.7 722.0,664.0 724.0,664.7 726.0,663.4 728.0,665.8 730.0,663.0 732.0,665.8 734.0,665.1 736.0,665.5 738.0,665.7 740.0,668.2 742.0,666.5 744.0,669.0 746.0,667.4 748.0,668.2 750.0,664.0 752.0,669.0 754.0,668.6 756.0,670.9 758.0,669.8 760.0,671.8 762.0,671.6 764.0,670.6 766.0,671.5 768.0,672.0 769.0,641.2 770.0,616.0 771.0,632.8 771.0,669.0 772.0,672.0 774.0,672.9 776.0,672.9 778.0,672.2 780.0,671.8 782.0,674.3 784.0,672.5 786.0,673.2 788.0,672.6 790.0,670.0 792.0,674.0 794.0,674.5 796.0,674.3 798.0,674.4 800.0,675.0 802.0,670.0 804.0,675.0 806.0,675.8 808.0,675.4 810.0,676.5 812.0,675.0 814.0,675.6 816.0,675.8 818.0,675.4 819.0,676.0 820.0,657.9 821.0,643.0 822.0,652.9 822.0,673.0 823.0,676.0 824.0,676.0 826.0,672.5 828.0,672.5 830.0,676.3 832.0,678.1 834.0,678.6 836.0,677.2 838.0,677.2 840.0,678.7 842.0,677.6 844.0,678.0 845.0,672.5 846.0,668.0 847.0,671.0 847.0,675.0 848.0,678.0 849.0,667.5 850.0,659.0 851.0,664.7 851.0,675.0 852.0,678.0 854.0,678.3 856.0,675.5 858.0,675.5 860.0,678.7 862.0,679.5 864.0,679.0 866.0,679.2 868.0,679.3 869.0,679.1 870.0,670.8 871.0,664.0 872.0,668.5 872.0,676.1 873.0,679.1 874.0,678.5 876.0,680.7 878.0,681.0 880.0,680.2 882.0,679.2 884.0,679.0 886.0,679.4 888.0,679.1 890.0,678.3 892.0,677.8 894.0,678.8 896.0,678.8 898.0,677.1 900.0,673.0 902.0,677.6 904.0,678.2 906.0,678.5 908.0,678.3 910.0,679.5 912.0,678.8 914.0,678.9 916.0,680.1 918.0,680.5 920.0,680.8 922.0,679.5 924.0,679.8 926.0,677.0 928.0,672.0 930.0,681.3 931.0,672.3 932.0,665.0 933.0,669.9 933.0,678.3 934.0,681.3 936.0,682.7 938.0,681.2 940.0,682.1 942.0,682.5 944.0,682.9 946.0,683.0 948.0,678.0 950.0,682.3 952.0,683.8 954.0,683.1 956.0,683.0 962.0,684.0 965.0,675.0 967.0,664.0 969.0,684.0 977.0,684.0 979.0,600.0 980.0,581.0 982.0,640.0 984.0,684.0 989.0,684.0 991.0,649.0 993.0,684.0 1002.0,684.0 1004.0,645.0 1006.0,684.0 1007.0,684.0" fill="none" stroke="#0000ff" stroke-width="1" shape-rendering="crispEdges"/><rect x="419" y="61" width="1" height="623" fill="#0000ff"/><polygon points="419,61 426,61 419,68" fill="#0000ff"/><rect x="956" y="61" width="1" height="623" fill="#0000ff"/><polygon points="951,60 961,60 956,66" fill="#0000ff"/><rect x="906" y="60" width="1" height="8" fill="#0000ff"/><polygon points="68.0,297.5 77.0,297.5 72.5,308.5" fill="none" stroke="#0000ff" stroke-width="1" shape-rendering="crispEdges"/><polygon points="118.0,339.5 127.0,339.5 122.5,327.5" fill="none" stroke="#0000ff" stroke-width="1" shape-rendering="crispEdges"/><polygon points="184.1,350 193.1,350 188.6,338" fill="none" stroke="#0000ff" stroke-width="1" shape-rendering="crispEdges"/><polygon points="234.5,427.5 243.5,427.5 239,415.5" fill="none" stroke="#0000ff" stroke-width="1" shape-rendering="crispEdges"/><polygon points="285.5,457 294.5,457 290,445" fill="none" stroke="#0000ff" stroke-width="1" shape-rendering="crispEdges"/></svg>
<div class="t" style="left:69px;top:285.45px;font-size:11.5px;line-height:11.5px;color:#0000ff;font-weight:normal;font-family:'Liberation Sans', sans-serif;background:#fff;">4</div>
<div class="t" style="left:119px;top:343.45px;font-size:11.5px;line-height:11.5px;color:#0000ff;font-weight:normal;font-family:'Liberation Sans', sans-serif;background:#fff;">5</div>
<div class="t" style="left:185px;top:352.95px;font-size:11.5px;line-height:11.5px;color:#0000ff;font-weight:normal;font-family:'Liberation Sans', sans-serif;background:#fff;">6</div>
<div class="t" style="left:235px;top:430.95px;font-size:11.5px;line-height:11.5px;color:#0000ff;font-weight:normal;font-family:'Liberation Sans', sans-serif;background:#fff;">7</div>
<div class="t" style="left:286.5px;top:460.45px;font-size:11.5px;line-height:11.5px;color:#0000ff;font-weight:normal;font-family:'Liberation Sans', sans-serif;background:#fff;">8</div>
<svg width="10" height="12" style="position:absolute;left:6px;top:44px"><polygon points="1,1 7,6 1,11" fill="#0000ff"/></svg>
<div class="t" style="left:14px;top:44.78px;font-size:12.3px;line-height:12.3px;color:#0000ff;font-weight:normal;font-family:'Liberation Sans', sans-serif;">Phase Noise 10.00dB/ Ref 0.000dBc/Hz [Sto]</div>
<div class="t" style="left:785px;top:57.03px;font-size:12px;line-height:12px;color:#0000ff;font-weight:normal;font-family:'Liberation Sans', sans-serif;">Carrier 156.247782 MHz</div>
<div class="t" style="right:16px;top:56.78px;font-size:12.3px;line-height:12.3px;color:#0000ff;font-weight:normal;font-family:'Liberation Sans', sans-serif;">5.9685 dBm</div>
<svg width="10" height="14" style="position:absolute;left:65px;top:62px"><polygon points="0,0 7,6.5 0,13" fill="#0000ff"/></svg>
<div class="t" style="right:962.5px;top:63.08px;font-size:12.3px;line-height:12.3px;color:#0000ff;font-weight:normal;font-family:'Liberation Sans', sans-serif;">0.000</div>
<div class="t" style="right:962.8px;top:101.28px;font-size:12.3px;line-height:12.3px;color:#808080;font-weight:normal;font-family:'Liberation Sans', sans-serif;">-10.00</div>
<div class="t" style="right:962.8px;top:140.28px;font-size:12.3px;line-height:12.3px;color:#808080;font-weight:normal;font-family:'Liberation Sans', sans-serif;">-20.00</div>
<div class="t" style="right:962.8px;top:178.28px;font-size:12.3px;line-height:12.3px;color:#808080;font-weight:normal;font-family:'Liberation Sans', sans-serif;">-30.00</div>
<div class="t" style="right:962.8px;top:217.28px;font-size:12.3px;line-height:12.3px;color:#808080;font-weight:normal;font-family:'Liberation Sans', sans-serif;">-40.00</div>
<div class="t" style="right:962.8px;top:255.28px;font-size:12.3px;line-height:12.3px;color:#808080;font-weight:normal;font-family:'Liberation Sans', sans-serif;">-50.00</div>
<div class="t" style="right:962.8px;top:294.28px;font-size:12.3px;line-height:12.3px;color:#808080;font-weight:normal;font-family:'Liberation Sans', sans-serif;">-60.00</div>
<div class="t" style="right:962.8px;top:332.28px;font-size:12.3px;line-height:12.3px;color:#808080;font-weight:normal;font-family:'Liberation Sans', sans-serif;">-70.00</div>
<div class="t" style="right:962.8px;top:371.28px;font-size:12.3px;line-height:12.3px;color:#808080;font-weight:normal;font-family:'Liberation Sans', sans-serif;">-80.00</div>
<div class="t" style="right:962.8px;top:409.28px;font-size:12.3px;line-height:12.3px;color:#808080;font-weight:normal;font-family:'Liberation Sans', sans-serif;">-90.00</div>
<div class="t" style="right:962.8px;top:448.28px;font-size:12.3px;line-height:12.3px;color:#808080;font-weight:normal;font-family:'Liberation Sans', sans-serif;">-100.0</div>
<div class="t" style="right:962.8px;top:486.28px;font-size:12.3px;line-height:12.3px;color:#808080;font-weight:normal;font-family:'Liberation Sans', sans-serif;">-110.0</div>
<div class="t" style="right:962.8px;top:525.28px;font-size:12.3px;line-height:12.3px;color:#808080;font-weight:normal;font-family:'Liberation Sans', sans-serif;">-120.0</div>
<div class="t" style="right:962.8px;top:563.28px;font-size:12.3px;line-height:12.3px;color:#808080;font-weight:normal;font-family:'Liberation Sans', sans-serif;">-130.0</div>
<div class="t" style="right:962.8px;top:602.28px;font-size:12.3px;line-height:12.3px;color:#808080;font-weight:normal;font-family:'Liberation Sans', sans-serif;">-140.0</div>
<div class="t" style="right:962.8px;top:640.28px;font-size:12.3px;line-height:12.3px;color:#808080;font-weight:normal;font-family:'Liberation Sans', sans-serif;">-150.0</div>
<div class="t" style="right:962.8px;top:679.28px;font-size:12.3px;line-height:12.3px;color:#808080;font-weight:normal;font-family:'Liberation Sans', sans-serif;">-160.0</div>
<div class="t" style="left:72.0px;transform:translateX(-50%);top:686.03px;font-size:12px;line-height:12px;color:#808080;font-weight:normal;font-family:'Liberation Sans', sans-serif;">100</div>
<div class="t" style="left:238.90288955266243px;transform:translateX(-50%);top:686.03px;font-size:12px;line-height:12px;color:#808080;font-weight:normal;font-family:'Liberation Sans', sans-serif;">1k</div>
<div class="t" style="left:405.80577910532486px;transform:translateX(-50%);top:686.03px;font-size:12px;line-height:12px;color:#808080;font-weight:normal;font-family:'Liberation Sans', sans-serif;">10k</div>
<div class="t" style="left:572.7086686579873px;transform:translateX(-50%);top:686.03px;font-size:12px;line-height:12px;color:#808080;font-weight:normal;font-family:'Liberation Sans', sans-serif;">100k</div>
<div class="t" style="left:739.6115582106497px;transform:translateX(-50%);top:686.03px;font-size:12px;line-height:12px;color:#808080;font-weight:normal;font-family:'Liberation Sans', sans-serif;">1M</div>
<div class="t" style="left:906.5144477633121px;transform:translateX(-50%);top:686.03px;font-size:12px;line-height:12px;color:#808080;font-weight:normal;font-family:'Liberation Sans', sans-serif;">10M</div>
<svg width="1024" height="768" style="position:absolute;left:0;top:0"><polygon points="66,691.5 78,691.5 72,685" fill="#0000ff" stroke="#0000ff"/><polygon points="116.5,691.5 128.5,691.5 122.5,685" fill="none" stroke="#0000ff" stroke-width="1"/><polygon points="182.5,691.5 194.5,691.5 188.5,685" fill="none" stroke="#0000ff" stroke-width="1"/><polygon points="233.5,691.5 245.5,691.5 239.5,685" fill="none" stroke="#0000ff" stroke-width="1"/><polygon points="284.5,691.5 296.5,691.5 290.5,685" fill="none" stroke="#0000ff" stroke-width="1"/></svg>
<div class="t" style="left:542px;top:69.78px;font-size:13.33px;line-height:13.33px;color:#0000ff;font-weight:normal;font-family:'Liberation Mono', monospace;">&gt;4:  100 Hz   -63.0886 dBc/Hz</div>
<div class="t" style="left:542px;top:82.78px;font-size:13.33px;line-height:13.33px;color:#0000ff;font-weight:normal;font-family:'Liberation Mono', monospace;"> 5:  200 Hz   -67.1432 dBc/Hz</div>
<div class="t" style="left:542px;top:95.78px;font-size:13.33px;line-height:13.33px;color:#0000ff;font-weight:normal;font-family:'Liberation Mono', monospace;"> 6:  500 Hz   -69.7062 dBc/Hz</div>
<div class="t" style="left:542px;top:108.78px;font-size:13.33px;line-height:13.33px;color:#0000ff;font-weight:normal;font-family:'Liberation Mono', monospace;"> 7:  1 kHz    -90.0943 dBc/Hz</div>
<div class="t" style="left:542px;top:121.78px;font-size:13.33px;line-height:13.33px;color:#0000ff;font-weight:normal;font-family:'Liberation Mono', monospace;"> 8:  2 kHz    -97.4295 dBc/Hz</div>
<div class="t" style="left:542px;top:134.78px;font-size:13.33px;line-height:13.33px;color:#0000ff;font-weight:normal;font-family:'Liberation Mono', monospace;"> X: Start 12 kHz</div>
<div class="t" style="left:542px;top:147.78px;font-size:13.33px;line-height:13.33px;color:#0000ff;font-weight:normal;font-family:'Liberation Mono', monospace;">     Stop 20 MHz</div>
<div class="t" style="left:542px;top:160.78px;font-size:13.33px;line-height:13.33px;color:#0000ff;font-weight:normal;font-family:'Liberation Mono', monospace;">   Center 10.006 MHz</div>
<div class="t" style="left:542px;top:173.78px;font-size:13.33px;line-height:13.33px;color:#0000ff;font-weight:normal;font-family:'Liberation Mono', monospace;">     Span 19.988 MHz</div>
<div class="t" style="left:542px;top:186.78px;font-size:13.33px;line-height:13.33px;color:#0000ff;font-weight:normal;font-family:'Liberation Mono', monospace;">=== Noise ===</div>
<div class="t" style="left:542px;top:199.78px;font-size:13.33px;line-height:13.33px;color:#0000ff;font-weight:normal;font-family:'Liberation Mono', monospace;">Analysis Range X: Band Marker</div>
<div class="t" style="left:542px;top:212.78px;font-size:13.33px;line-height:13.33px;color:#0000ff;font-weight:normal;font-family:'Liberation Mono', monospace;">Analysis Range Y: Band Marker</div>
<div class="t" style="left:542px;top:225.78px;font-size:13.33px;line-height:13.33px;color:#0000ff;font-weight:normal;font-family:'Liberation Mono', monospace;">Intg Noise: -83.5203 dBc / 19.69 MHz</div>
<div class="t" style="left:542px;top:238.78px;font-size:13.33px;line-height:13.33px;color:#0000ff;font-weight:normal;font-family:'Liberation Mono', monospace;"> RMS Noise: 94.2969 &micro;rad</div>
<div class="t" style="left:542px;top:251.78px;font-size:13.33px;line-height:13.33px;color:#0000ff;font-weight:normal;font-family:'Liberation Mono', monospace;">            5.40282 mdeg</div>
<div class="t" style="left:542px;top:264.78px;font-size:13.33px;line-height:13.33px;color:#0000ff;font-weight:normal;font-family:'Liberation Mono', monospace;">RMS Jitter: 96.051 fsec</div>
<div class="t" style="left:542px;top:277.78px;font-size:13.33px;line-height:13.33px;color:#0000ff;font-weight:normal;font-family:'Liberation Mono', monospace;">Residual FM: 816.95 Hz</div>
<div class="r" style="left:6px;top:699px;width:1010px;height:19px;background:#c4c4c4;border-top:1px solid #808080;border-left:1px solid #808080;box-sizing:border-box;"></div>
<div class="r" style="left:7px;top:700px;width:1009px;height:1px;background:#f0f0f0;"></div>
<div class="r" style="left:7px;top:700px;width:1px;height:18px;background:#f0f0f0;"></div>
<div class="r" style="left:8px;top:701px;width:76px;height:16px;background:#a8a8a8;box-sizing:border-box;border-top:1px solid #f4f4f4;border-left:1px solid #f4f4f4;border-right:1px solid #8c8c8c;border-bottom:1px solid #8c8c8c;"></div>
<div class="t" style="left:10px;top:704.28px;font-size:11.7px;line-height:11.7px;color:#101010;font-weight:normal;font-family:'Liberation Sans', sans-serif;letter-spacing:0.15px;">IF Gain 20dB</div>
<div class="r" style="left:231px;top:701px;width:142px;height:16px;background:#a8a8a8;box-sizing:border-box;border-top:1px solid #f4f4f4;border-left:1px solid #f4f4f4;border-right:1px solid #8c8c8c;border-bottom:1px solid #8c8c8c;"></div>
<div class="t" style="left:234px;top:704.03px;font-size:12px;line-height:12px;color:#101010;font-weight:normal;font-family:'Liberation Sans', sans-serif;letter-spacing:0px;">Freq Band [99M-1.5GHz]</div>
<div class="r" style="left:520px;top:701px;width:110px;height:16px;background:#a8a8a8;box-sizing:border-box;border-top:1px solid #f4f4f4;border-left:1px solid #f4f4f4;border-right:1px solid #8c8c8c;border-bottom:1px solid #8c8c8c;"></div>
<div class="t" style="left:523px;top:704.03px;font-size:12px;line-height:12px;color:#101010;font-weight:normal;font-family:'Liberation Sans', sans-serif;letter-spacing:0.45px;">LO Opt [&gt;150kHz]</div>
<div class="r" style="left:777px;top:701px;width:45px;height:16px;background:#a8a8a8;box-sizing:border-box;border-top:1px solid #f4f4f4;border-left:1px solid #f4f4f4;border-right:1px solid #8c8c8c;border-bottom:1px solid #8c8c8c;"></div>
<div class="t" style="left:780px;top:704.03px;font-size:12px;line-height:12px;color:#101010;font-weight:normal;font-family:'Liberation Sans', sans-serif;letter-spacing:0.7px;">724pts</div>
<div class="r" style="left:969px;top:701px;width:47px;height:16px;background:#a8a8a8;box-sizing:border-box;border-top:1px solid #f4f4f4;border-left:1px solid #f4f4f4;border-right:1px solid #8c8c8c;border-bottom:1px solid #8c8c8c;"></div>
<div class="t" style="left:971px;top:704.03px;font-size:12px;line-height:12px;color:#101010;font-weight:normal;font-family:'Liberation Sans', sans-serif;letter-spacing:0.3px;">Corre 5</div>
<div class="r" style="left:2px;top:720px;width:1016px;height:19px;background:#000;"></div>
<div class="r" style="left:3px;top:721px;width:1015px;height:17px;background:#505050;"></div>
<div class="r" style="left:5px;top:723px;width:69px;height:14px;background:#0000ff;"></div>
<div class="t" style="left:8px;top:725.62px;font-size:11.3px;line-height:11.3px;color:#fff;font-weight:normal;font-family:'Liberation Sans', sans-serif;">Phase Noise</div>
<div class="t" style="left:80px;top:724.87px;font-size:12.2px;line-height:12.2px;color:#f4f4e8;font-weight:normal;font-family:'Liberation Sans', sans-serif;">Start 100 Hz</div>
<div class="t" style="right:65px;top:724.91px;font-size:12.15px;line-height:12.15px;color:#f4f4e8;font-weight:normal;font-family:'Liberation Sans', sans-serif;">Stop 40 MHz</div>
<div class="r" style="left:963px;top:722px;width:42px;height:16px;background:#333;box-sizing:border-box;border:1px solid #646464;border-right-color:#6a6a6a;"></div>
<div class="t" style="left:971px;top:724.87px;font-size:12.2px;line-height:12.2px;color:#fff;font-weight:normal;font-family:'Liberation Sans', sans-serif;">20%</div>
<div class="r" style="left:1007px;top:722px;width:12px;height:16px;background:#333;box-sizing:border-box;border:1px solid #646464;"></div>
<div class="t" style="left:1010px;top:724.87px;font-size:12.2px;line-height:12.2px;color:#9cf;font-weight:normal;font-family:'Liberation Sans', sans-serif;">/</div>
<div class="r" style="left:0px;top:739px;width:1018px;height:2px;background:#e8e8e8;"></div>
<div class="r" style="left:2px;top:741px;width:1016px;height:23px;background:#303030;"></div>
<div class="r" style="left:3px;top:742px;width:1015px;height:21px;background:#555;"></div>
<div class="r" style="left:2px;top:764px;width:1016px;height:2px;background:#e8e8e8;"></div>
<div class="r" style="left:0px;top:766px;width:1024px;height:2px;background:#000;"></div>
<div class="r" style="left:376px;top:743px;width:129px;height:19px;background:#0000ff;box-sizing:border-box;border:1px solid #333;"></div>
<div class="t" style="left:379px;top:746.21px;font-size:14.2px;line-height:14.2px;color:#fff;font-weight:normal;font-family:'Liberation Sans', sans-serif;">Phase Noise: Meas</div>
<div class="r" style="left:507px;top:743px;width:28px;height:19px;background:#c0c0c0;box-sizing:border-box;border:1px solid #333;"></div>
<div class="t" style="left:510px;top:746.21px;font-size:14.2px;line-height:14.2px;color:#8a8a8a;font-weight:normal;font-family:'Liberation Sans', sans-serif;">Cor</div>
<div class="r" style="left:536px;top:743px;width:53px;height:19px;background:#c0c0c0;box-sizing:border-box;border:1px solid #333;"></div>
<div class="t" style="left:539px;top:746.21px;font-size:14.2px;line-height:14.2px;color:#8a8a8a;font-weight:normal;font-family:'Liberation Sans', sans-serif;">Ctrl</div>
<div class="t" style="right:437px;top:746.21px;font-size:14.2px;line-height:14.2px;color:#8a8a8a;font-weight:normal;font-family:'Liberation Sans', sans-serif;">0V</div>
<div class="r" style="left:591px;top:743px;width:59px;height:19px;background:#c0c0c0;box-sizing:border-box;border:1px solid #333;"></div>
<div class="t" style="left:594px;top:746.21px;font-size:14.2px;line-height:14.2px;color:#8a8a8a;font-weight:normal;font-family:'Liberation Sans', sans-serif;">Pow</div>
<div class="t" style="right:376.5px;top:746.21px;font-size:14.2px;line-height:14.2px;color:#8a8a8a;font-weight:normal;font-family:'Liberation Sans', sans-serif;">0V</div>
<div class="r" style="left:651px;top:743px;width:62px;height:19px;background:#c9c38e;box-sizing:border-box;border:1px solid #333;"></div>
<div class="t" style="left:654px;top:746.21px;font-size:14.2px;line-height:14.2px;color:#000;font-weight:normal;font-family:'Liberation Sans', sans-serif;">Attn 0dB</div>
<div class="r" style="left:715px;top:743px;width:56px;height:19px;background:#c0c0c0;box-sizing:border-box;border:1px solid #333;"></div>
<div class="t" style="left:718px;top:746.21px;font-size:14.2px;line-height:14.2px;color:#8a8a8a;font-weight:normal;font-family:'Liberation Sans', sans-serif;">ExtRef1</div>
<div class="r" style="left:773px;top:743px;width:56px;height:19px;background:#c0c0c0;box-sizing:border-box;border:1px solid #333;"></div>
<div class="t" style="left:776px;top:746.21px;font-size:14.2px;line-height:14.2px;color:#8a8a8a;font-weight:normal;font-family:'Liberation Sans', sans-serif;">ExtRef2</div>
<div class="r" style="left:831px;top:743px;width:34px;height:19px;background:#c0c0c0;box-sizing:border-box;border:1px solid #333;"></div>
<div class="t" style="left:834px;top:746.21px;font-size:14.2px;line-height:14.2px;color:#8a8a8a;font-weight:normal;font-family:'Liberation Sans', sans-serif;">Stop</div>
<div class="r" style="left:867px;top:743px;width:28px;height:19px;background:#c0c0c0;box-sizing:border-box;border:1px solid #333;"></div>
<div class="t" style="left:870px;top:746.21px;font-size:14.2px;line-height:14.2px;color:#8a8a8a;font-weight:normal;font-family:'Liberation Sans', sans-serif;">Svc</div>
<div class="r" style="left:897px;top:743px;width:122px;height:19px;background:#c0c0c0;box-sizing:border-box;border:1px solid #333;"></div>
<div class="t" style="left:901px;top:746.63px;font-size:14.9px;line-height:14.9px;color:#000;font-weight:normal;font-family:'Liberation Sans', sans-serif;">2022-11-10 11:09</div></body></html>
